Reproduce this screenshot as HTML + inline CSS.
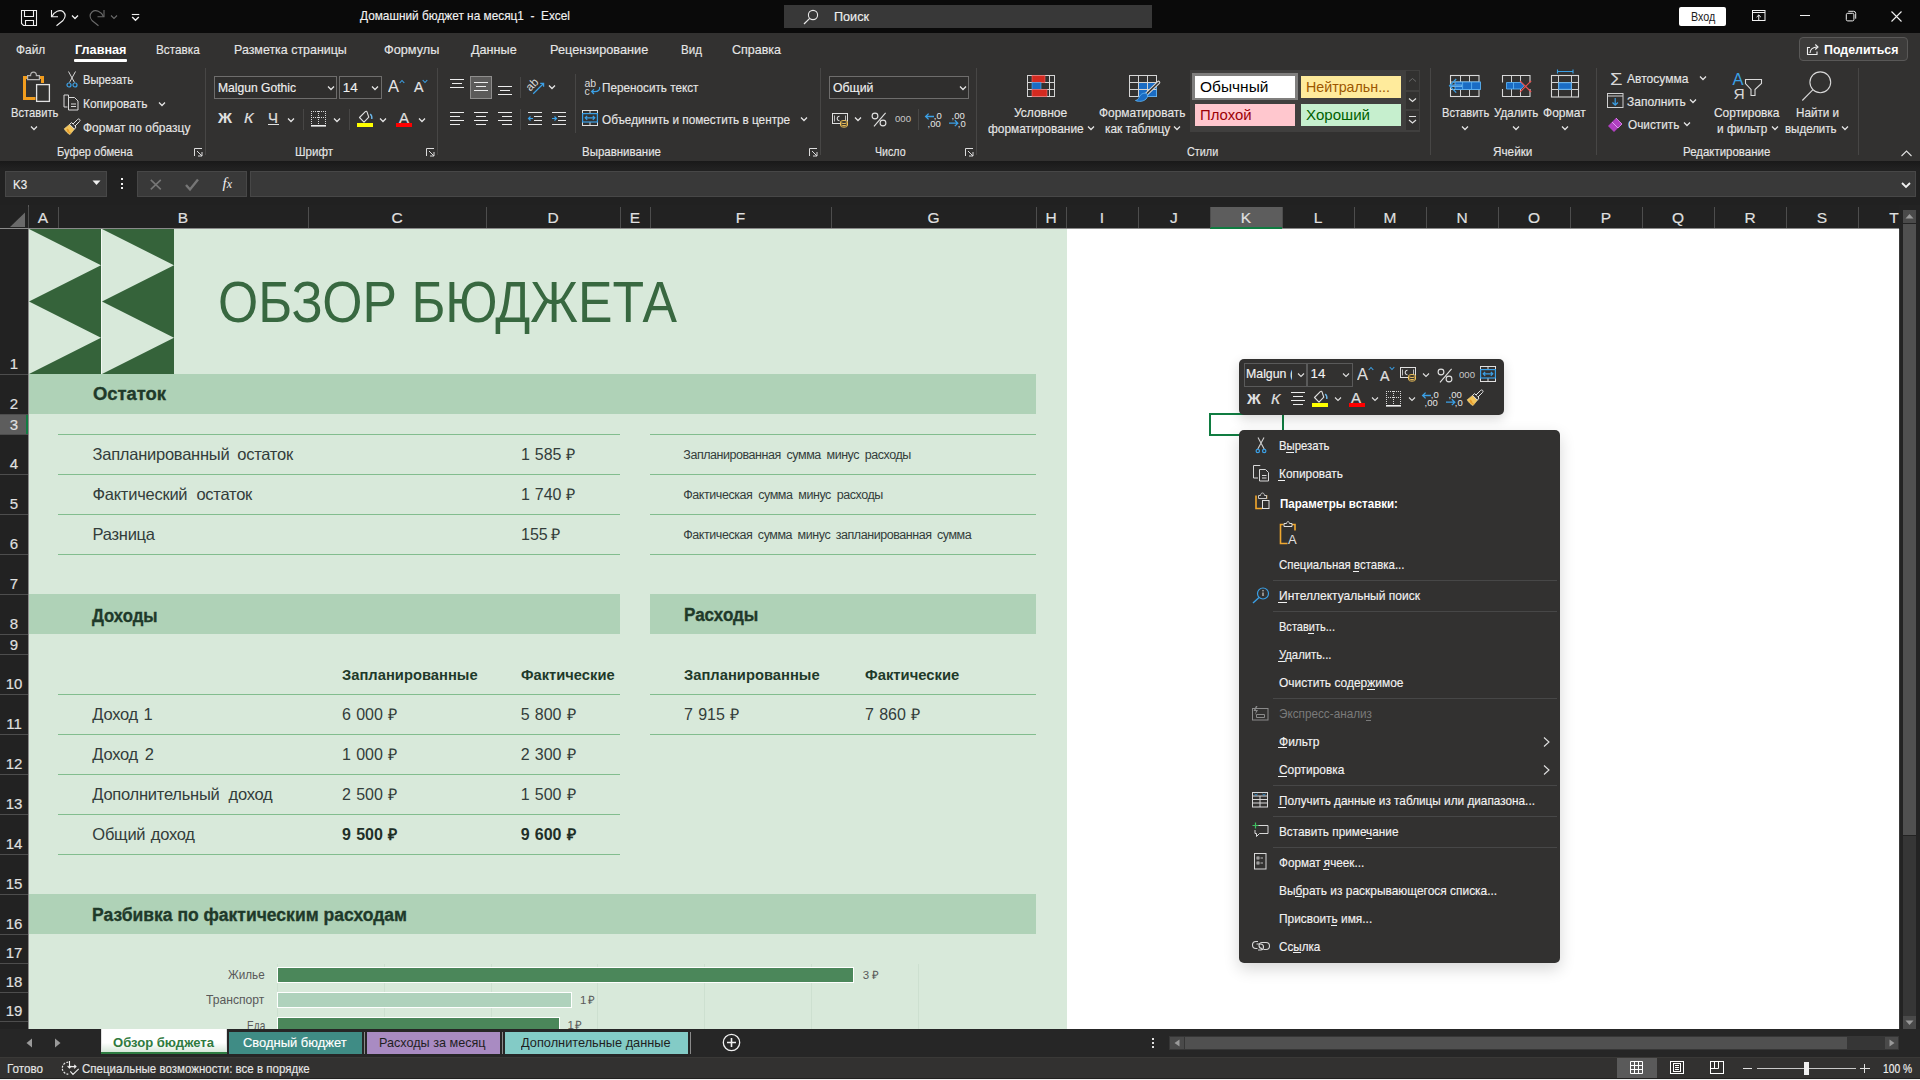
<!DOCTYPE html>
<html><head><meta charset="utf-8">
<style>
*{margin:0;padding:0;box-sizing:border-box}
html,body{width:1920px;height:1080px;overflow:hidden;background:#212121;font-family:"Liberation Sans",sans-serif;color:#e8e8e8;position:relative}
.a{position:absolute}
.t{position:absolute;white-space:pre;line-height:1}
svg.a{overflow:visible}
</style></head><body>
<div class="a" style="left:0px;top:0px;width:1920px;height:33px;background:#0a0a0a;"></div>
<svg class="a" style="left:20px;top:9px;" width="18" height="18" viewBox="0 0 18 18"><path d="M1.5 1.5H16.5V16.5H3.5L1.5 14.5Z" fill="none" stroke="#f0f0f0" stroke-width="1.1"/><path d="M4.5 1.5V7.5H13.5V1.5M5.5 16.5V11.5H13.5V16.5" fill="none" stroke="#f0f0f0" stroke-width="1.1"/></svg>
<svg class="a" style="left:48px;top:8px;" width="20" height="20" viewBox="0 0 20 20"><path d="M3.5 2V8.8H10" fill="none" stroke="#f0f0f0" stroke-width="1.1"/><path d="M4 8.5C6 3.5 12 1 15.5 4C18 6.5 17 10 15 12.5L8.5 17.8" fill="none" stroke="#f0f0f0" stroke-width="1.1"/></svg>
<svg class="a" style="left:70.5px;top:13.5px;" width="8" height="6" viewBox="0 0 8 6"><path d="M1 1.5l3 3 3-3" fill="none" stroke="#f0f0f0" stroke-width="1.3"/></svg>
<svg class="a" style="left:88px;top:8px;" width="20" height="20" viewBox="0 0 20 20"><path d="M16 2V8.8H9.5" fill="none" stroke="#6a6a6a" stroke-width="1.1"/><path d="M15.5 8.5C13.5 3.5 7.5 1 4 4C1.5 6.5 2 10 4 12.5L10.5 17.8" fill="none" stroke="#6a6a6a" stroke-width="1.1"/></svg>
<svg class="a" style="left:109.5px;top:13.5px;" width="8" height="6" viewBox="0 0 8 6"><path d="M1 1.5l3 3 3-3" fill="none" stroke="#6a6a6a" stroke-width="1.1"/></svg>
<svg class="a" style="left:131px;top:13px;" width="9" height="9" viewBox="0 0 9 9"><path d="M0.8 1.5h7.5" stroke="#f0f0f0" stroke-width="1.1"/><path d="M1.2 4l3.3 3.2 3.3-3.2" fill="none" stroke="#f0f0f0" stroke-width="1.4"/></svg>
<div class="t" style="left:360.00px;top:8.89px;font-size:13.3px;color:#f2f2f2;-webkit-text-stroke:0.15px currentColor;transform:scaleX(0.8901);transform-origin:0 0;">Домашний бюджет на месяц1  -  Excel</div>
<div class="a" style="left:784px;top:5px;width:368px;height:23px;background:#383838;"></div>
<svg class="a" style="left:803px;top:9px;" width="16" height="16" viewBox="0 0 16 16"><circle cx="10" cy="6" r="4.6" fill="none" stroke="#e8e8e8" stroke-width="1.1"/><path d="M6.7 9.3L1 15" stroke="#e8e8e8" stroke-width="1.2"/></svg>
<div class="t" style="left:834.00px;top:10.00px;font-size:13.3px;color:#f0f0f0;-webkit-text-stroke:0.15px currentColor;transform:scaleX(0.9497);transform-origin:0 0;">Поиск</div>
<div class="a" style="left:1679px;top:7px;width:47px;height:19px;background:#ffffff;border-radius:2px"></div>
<div class="t" style="left:1690.50px;top:10.20px;font-size:13.3px;color:#1b1b1b;transform:scaleX(0.8076);transform-origin:0 0;">Вход</div>
<svg class="a" style="left:1752px;top:10px;" width="14" height="12" viewBox="0 0 14 12"><rect x="0.5" y="0.5" width="12.5" height="10" fill="none" stroke="#f0f0f0" stroke-width="1"/><path d="M0.5 2.5h12.5" stroke="#f0f0f0" stroke-width="1"/><path d="M6.75 10V5M4.6 7.1L6.75 5 8.9 7.1" fill="none" stroke="#f0f0f0" stroke-width="1"/></svg>
<div class="a" style="left:1800px;top:15px;width:10px;height:1px;background:#f0f0f0;"></div>
<svg class="a" style="left:1845px;top:10px;" width="12" height="12" viewBox="0 0 12 12"><rect x="1.3" y="3.3" width="7.6" height="7.6" rx="1.4" fill="none" stroke="#f0f0f0" stroke-width="1"/><path d="M3.3 1.3h5.2a2.2 2.2 0 0 1 2.2 2.2V8.7" fill="none" stroke="#f0f0f0" stroke-width="1"/></svg>
<svg class="a" style="left:1891px;top:11px;" width="11" height="11" viewBox="0 0 11 11"><path d="M0.5 0.5l10 10M10.5 0.5l-10 10" stroke="#f0f0f0" stroke-width="1.1"/></svg>
<div class="a" style="left:0px;top:33px;width:1920px;height:128px;background:#323130;"></div>
<div class="t" style="left:15.60px;top:42.90px;font-size:13.3px;color:#e6e6e6;-webkit-text-stroke:0.15px currentColor;transform:scaleX(0.8930);transform-origin:0 0;">Файл</div>
<div class="t" style="left:74.50px;top:42.90px;font-size:13.3px;color:#ffffff;font-weight:bold;transform:scaleX(0.9521);transform-origin:0 0;">Главная</div>
<div class="a" style="left:74px;top:59px;width:53px;height:3px;background:#ffffff;border-radius:1px"></div>
<div class="t" style="left:155.60px;top:42.90px;font-size:13.3px;color:#e6e6e6;-webkit-text-stroke:0.15px currentColor;transform:scaleX(0.8840);transform-origin:0 0;">Вставка</div>
<div class="t" style="left:234.40px;top:42.90px;font-size:13.3px;color:#e6e6e6;-webkit-text-stroke:0.15px currentColor;transform:scaleX(0.9349);transform-origin:0 0;">Разметка страницы</div>
<div class="t" style="left:383.50px;top:42.90px;font-size:13.3px;color:#e6e6e6;-webkit-text-stroke:0.15px currentColor;transform:scaleX(0.9572);transform-origin:0 0;">Формулы</div>
<div class="t" style="left:471.00px;top:42.90px;font-size:13.3px;color:#e6e6e6;-webkit-text-stroke:0.15px currentColor;transform:scaleX(0.9511);transform-origin:0 0;">Данные</div>
<div class="t" style="left:550.30px;top:42.90px;font-size:13.3px;color:#e6e6e6;-webkit-text-stroke:0.15px currentColor;transform:scaleX(0.9572);transform-origin:0 0;">Рецензирование</div>
<div class="t" style="left:681.40px;top:42.90px;font-size:13.3px;color:#e6e6e6;-webkit-text-stroke:0.15px currentColor;transform:scaleX(0.8686);transform-origin:0 0;">Вид</div>
<div class="t" style="left:732.40px;top:42.90px;font-size:13.3px;color:#e6e6e6;-webkit-text-stroke:0.15px currentColor;transform:scaleX(0.9392);transform-origin:0 0;">Справка</div>
<div class="a" style="left:1799px;top:37px;width:109px;height:24px;background:#3d3c3b;border:1px solid #595857;border-radius:4px"></div>
<svg class="a" style="left:1806px;top:42px;" width="14" height="14" viewBox="0 0 14 14"><path d="M4 5.5H1.5V12.5H11V9.5" fill="none" stroke="#f0f0f0" stroke-width="1.1"/><path d="M4 11C4 7.5 7 5 11 5" fill="none" stroke="#f0f0f0" stroke-width="1.1"/><path d="M9.3 2.5L12 5 9.3 7.5" fill="none" stroke="#f0f0f0" stroke-width="1.1"/></svg>
<div class="t" style="left:1823.60px;top:43.09px;font-size:13.3px;color:#ffffff;font-weight:bold;transform:scaleX(0.9321);transform-origin:0 0;">Поделиться</div>
<div class="a" style="left:205px;top:68px;width:1px;height:87px;background:#474645;"></div>
<div class="a" style="left:437px;top:68px;width:1px;height:87px;background:#474645;"></div>
<div class="a" style="left:820px;top:68px;width:1px;height:87px;background:#474645;"></div>
<div class="a" style="left:976px;top:68px;width:1px;height:87px;background:#474645;"></div>
<div class="a" style="left:1430px;top:68px;width:1px;height:87px;background:#474645;"></div>
<div class="a" style="left:1596px;top:68px;width:1px;height:87px;background:#474645;"></div>
<div class="a" style="left:1858px;top:68px;width:1px;height:87px;background:#474645;"></div>
<svg class="a" style="left:20px;top:70px;" width="33" height="34" viewBox="0 0 33 34"><g fill="#f29d1e"><rect x="3" y="6" width="3" height="24"/><rect x="3" y="6" width="4.5" height="3"/><rect x="19.5" y="6" width="4.5" height="3"/><rect x="21" y="6" width="3" height="7"/><rect x="3" y="27" width="12.5" height="3"/></g><path d="M7.6 5.6h3c0-2 1.3-3.4 2.9-3.4s2.9 1.4 2.9 3.4h3v4H7.6z" fill="#323130" stroke="#b4b4b4" stroke-width="1.2"/><rect x="16.6" y="14.6" width="12.8" height="16.8" fill="#323130" stroke="#e2e2e2" stroke-width="1.3"/></svg>
<div class="t" style="left:10.50px;top:105.90px;font-size:13.3px;color:#e6e6e6;-webkit-text-stroke:0.15px currentColor;transform:scaleX(0.8408);transform-origin:0 0;">Вставить</div>
<svg class="a" style="left:29.5px;top:125px;" width="8" height="6" viewBox="0 0 8 6"><path d="M1 1.5l3 3 3-3" fill="none" stroke="#e6e6e6" stroke-width="1.25"/></svg>
<svg class="a" style="left:66px;top:71px;" width="12" height="17" viewBox="0 0 12 17"><path d="M2.5 0.5l6 11M9.5 0.5l-6 11" stroke="#d8d8d8" stroke-width="1"/><circle cx="3" cy="14" r="2" fill="none" stroke="#3ba0e6" stroke-width="1.2"/><circle cx="9" cy="14" r="2" fill="none" stroke="#3ba0e6" stroke-width="1.2"/></svg>
<div class="t" style="left:83.40px;top:73.19px;font-size:13.3px;color:#e6e6e6;-webkit-text-stroke:0.15px currentColor;transform:scaleX(0.8469);transform-origin:0 0;">Вырезать</div>
<svg class="a" style="left:63px;top:94px;" width="17" height="17" viewBox="0 0 17 17"><path d="M5.5 3.5V1H1v12h3.5" fill="none" stroke="#d8d8d8" stroke-width="1"/><path d="M5.5 3.5h6l3.5 3.5v9H5.5z" fill="none" stroke="#d8d8d8" stroke-width="1"/><path d="M8 10h5M8 12.5h5" stroke="#d8d8d8" stroke-width="1"/></svg>
<div class="t" style="left:83.40px;top:96.69px;font-size:13.3px;color:#e6e6e6;-webkit-text-stroke:0.15px currentColor;transform:scaleX(0.8993);transform-origin:0 0;">Копировать</div>
<svg class="a" style="left:158.0px;top:101px;" width="8" height="6" viewBox="0 0 8 6"><path d="M1 1.5l3 3 3-3" fill="none" stroke="#e6e6e6" stroke-width="1.25"/></svg>
<svg class="a" style="left:63px;top:118px;" width="18" height="18" viewBox="0 0 18 18"><path d="M1.2 10.8L6.6 6.4L11.4 11.2L7 16.6C4.6 15.4 2.4 13.2 1.2 10.8Z" fill="#f2c45a" stroke="#f7dc90" stroke-width="0.6"/><path d="M4.2 12.5L7.6 15.4M3.8 11l2.2 1.8" stroke="#e89a28" stroke-width="1.3"/><path d="M6.6 6.4L8.6 4.6L13 9L11.4 11.2Z" fill="#323130" stroke="#e8e8e8" stroke-width="1"/><path d="M10 6L14.6 1.4C15.2 0.8 16 0.8 16.6 1.4C17.2 2 17.2 2.8 16.6 3.4L12 8" fill="#323130" stroke="#e8e8e8" stroke-width="1"/></svg>
<div class="t" style="left:83.40px;top:120.79px;font-size:13.3px;color:#e6e6e6;-webkit-text-stroke:0.15px currentColor;transform:scaleX(0.9006);transform-origin:0 0;">Формат по образцу</div>
<div class="t" style="left:56.70px;top:144.89px;font-size:13.3px;color:#e6e6e6;-webkit-text-stroke:0.15px currentColor;transform:scaleX(0.8365);transform-origin:0 0;">Буфер обмена</div>
<svg class="a" style="left:193.5px;top:147.5px;" width="9" height="9" viewBox="0 0 9 9"><path d="M0.5 8V0.5H8" fill="none" stroke="#dcdcdc" stroke-width="1"/><path d="M3 3l5 5M4 8h4V4" fill="none" stroke="#dcdcdc" stroke-width="1"/></svg>
<div class="a" style="left:214px;top:76px;width:123px;height:23px;background:#2f2e2d;border:1px solid #6e6d6c"></div>
<div class="t" style="left:217.60px;top:80.79px;font-size:13.3px;color:#f0f0f0;-webkit-text-stroke:0.15px currentColor;transform:scaleX(0.9107);transform-origin:0 0;">Malgun Gothic</div>
<svg class="a" style="left:326.5px;top:85px;" width="8" height="6" viewBox="0 0 8 6"><path d="M1 1.5l3 3 3-3" fill="none" stroke="#e6e6e6" stroke-width="1.25"/></svg>
<div class="a" style="left:339px;top:76px;width:43px;height:23px;background:#2f2e2d;border:1px solid #6e6d6c"></div>
<div class="t" style="left:342.80px;top:80.79px;font-size:13.3px;color:#f0f0f0;-webkit-text-stroke:0.15px currentColor;">14</div>
<svg class="a" style="left:371.0px;top:85px;" width="8" height="6" viewBox="0 0 8 6"><path d="M1 1.5l3 3 3-3" fill="none" stroke="#e6e6e6" stroke-width="1.25"/></svg>
<div class="t" style="left:388.00px;top:77.65px;font-size:17px;color:#e6e6e6;transform:scaleX(0.9701);transform-origin:0 0;">A</div>
<svg class="a" style="left:399px;top:79px;" width="6" height="5" viewBox="0 0 6 5"><path d="M0.7 4l2.3-2.5 2.3 2.5" fill="none" stroke="#3ba0e6" stroke-width="1.1"/></svg>
<div class="t" style="left:413.50px;top:80.20px;font-size:14px;color:#e6e6e6;-webkit-text-stroke:0.15px currentColor;transform:scaleX(1.0173);transform-origin:0 0;">A</div>
<svg class="a" style="left:422px;top:79px;" width="6" height="5" viewBox="0 0 6 5"><path d="M0.7 1l2.3 2.5 2.3-2.5" fill="none" stroke="#3ba0e6" stroke-width="1.1"/></svg>
<div class="t" style="left:218.00px;top:111.40px;font-size:14px;color:#e0e0e0;font-weight:bold;transform:scaleX(1.1064);transform-origin:0 0;">Ж</div>
<div class="t" style="left:244.00px;top:111.40px;font-size:14px;color:#e0e0e0;-webkit-text-stroke:0.15px currentColor;font-style:italic;transform:scaleX(1.1514);transform-origin:0 0;">К</div>
<div class="t" style="left:268.00px;top:111.10px;font-size:14px;color:#e0e0e0;-webkit-text-stroke:0.15px currentColor;transform:scaleX(1.0717);transform-origin:0 0;">Ч</div>
<div class="a" style="left:267.5px;top:124px;width:11px;height:1px;background:#e0e0e0;"></div>
<svg class="a" style="left:286.5px;top:116.5px;" width="8" height="6" viewBox="0 0 8 6"><path d="M1 1.5l3 3 3-3" fill="none" stroke="#e6e6e6" stroke-width="1.25"/></svg>
<div class="a" style="left:303px;top:109px;width:1px;height:21px;background:#474645;"></div>
<svg class="a" style="left:311px;top:111px;" width="16" height="17" viewBox="0 0 16 17"><g fill="#d8d8d8"><rect x="0" y="0" width="1" height="1"/><rect x="0" y="2" width="1" height="1"/><rect x="0" y="4" width="1" height="1"/><rect x="0" y="6" width="1" height="1"/><rect x="0" y="8" width="1" height="1"/><rect x="0" y="10" width="1" height="1"/><rect x="0" y="12" width="1" height="1"/><rect x="2" y="0" width="1" height="1"/><rect x="2" y="6" width="1" height="1"/><rect x="4" y="0" width="1" height="1"/><rect x="4" y="6" width="1" height="1"/><rect x="6" y="0" width="1" height="1"/><rect x="6" y="6" width="1" height="1"/><rect x="7" y="0" width="1" height="1"/><rect x="7" y="2" width="1" height="1"/><rect x="7" y="4" width="1" height="1"/><rect x="7" y="6" width="1" height="1"/><rect x="7" y="8" width="1" height="1"/><rect x="7" y="10" width="1" height="1"/><rect x="7" y="12" width="1" height="1"/><rect x="8" y="0" width="1" height="1"/><rect x="8" y="6" width="1" height="1"/><rect x="10" y="0" width="1" height="1"/><rect x="10" y="6" width="1" height="1"/><rect x="12" y="0" width="1" height="1"/><rect x="12" y="6" width="1" height="1"/><rect x="14" y="0" width="1" height="1"/><rect x="14" y="2" width="1" height="1"/><rect x="14" y="4" width="1" height="1"/><rect x="14" y="6" width="1" height="1"/><rect x="14" y="8" width="1" height="1"/><rect x="14" y="10" width="1" height="1"/><rect x="14" y="12" width="1" height="1"/></g><rect x="0" y="14" width="15" height="1.6" fill="#f0f0f0"/></svg>
<svg class="a" style="left:332.5px;top:116.5px;" width="8" height="6" viewBox="0 0 8 6"><path d="M1 1.5l3 3 3-3" fill="none" stroke="#e6e6e6" stroke-width="1.25"/></svg>
<div class="a" style="left:349px;top:109px;width:1px;height:21px;background:#474645;"></div>
<svg class="a" style="left:357px;top:109px;" width="18" height="15" viewBox="0 0 18 15"><path d="M2.5 8.5L8.3 2.7c0.6-0.6 1.4-0.6 1.7 0.2L11.8 8.2L7 13.2z" fill="none" stroke="#e0e0e0" stroke-width="1.1" stroke-linejoin="round"/><path d="M13.2 5.2c1.2 0.8 1.9 2.5 1.6 4.8" fill="none" stroke="#6cb8ec" stroke-width="1.4"/></svg>
<div class="a" style="left:357px;top:123px;width:16px;height:4px;background:#ffff00;"></div>
<svg class="a" style="left:378.5px;top:116.5px;" width="8" height="6" viewBox="0 0 8 6"><path d="M1 1.5l3 3 3-3" fill="none" stroke="#e6e6e6" stroke-width="1.25"/></svg>
<div class="t" style="left:399.40px;top:110.35px;font-size:15px;color:#e0e0e0;-webkit-text-stroke:0.15px currentColor;transform:scaleX(0.9995);transform-origin:0 0;">A</div>
<div class="a" style="left:396px;top:123px;width:16px;height:4px;background:#ff0000;"></div>
<svg class="a" style="left:417.5px;top:116.5px;" width="8" height="6" viewBox="0 0 8 6"><path d="M1 1.5l3 3 3-3" fill="none" stroke="#e6e6e6" stroke-width="1.25"/></svg>
<div class="t" style="left:294.80px;top:144.89px;font-size:13.3px;color:#e6e6e6;-webkit-text-stroke:0.15px currentColor;transform:scaleX(0.8684);transform-origin:0 0;">Шрифт</div>
<svg class="a" style="left:426px;top:147.5px;" width="9" height="9" viewBox="0 0 9 9"><path d="M0.5 8V0.5H8" fill="none" stroke="#dcdcdc" stroke-width="1"/><path d="M3 3l5 5M4 8h4V4" fill="none" stroke="#dcdcdc" stroke-width="1"/></svg>
<div class="a" style="left:450px;top:79px;width:14px;height:1px;background:#ececec;"></div>
<div class="a" style="left:452px;top:83px;width:10px;height:1px;background:#ececec;"></div>
<div class="a" style="left:450px;top:87px;width:14px;height:1px;background:#ececec;"></div>
<div class="a" style="left:470px;top:76px;width:22px;height:23px;background:#5c5b5a;border:1px solid #8f8e8d"></div>
<div class="a" style="left:474px;top:82px;width:14px;height:1px;background:#ececec;"></div>
<div class="a" style="left:476px;top:86px;width:10px;height:1px;background:#ececec;"></div>
<div class="a" style="left:474px;top:90px;width:14px;height:1px;background:#ececec;"></div>
<div class="a" style="left:498px;top:86px;width:14px;height:1px;background:#ececec;"></div>
<div class="a" style="left:500px;top:90px;width:10px;height:1px;background:#ececec;"></div>
<div class="a" style="left:498px;top:94px;width:14px;height:1px;background:#ececec;"></div>
<div class="a" style="left:520px;top:77px;width:1px;height:21px;background:#474645;"></div>
<svg class="a" style="left:526px;top:77px;" width="20" height="19" viewBox="0 0 20 19"><text x="0.5" y="11.3" font-family="Liberation Sans" font-size="11.5" fill="#dcdcdc" transform="rotate(-45 6.5 8.5)">ab</text><path d="M7.2 16.8L17.3 6.7M14.2 6.4h3.4v3.4" fill="none" stroke="#3ba0e6" stroke-width="1.25"/></svg>
<svg class="a" style="left:547.5px;top:84px;" width="8" height="6" viewBox="0 0 8 6"><path d="M1 1.5l3 3 3-3" fill="none" stroke="#e6e6e6" stroke-width="1.25"/></svg>
<div class="a" style="left:575px;top:74px;width:1px;height:59px;background:#474645;"></div>
<svg class="a" style="left:584px;top:78px;" width="18" height="18" viewBox="0 0 18 18"><text x="0.5" y="9" font-family="Liberation Sans" font-size="10.5" fill="#dcdcdc">ab</text><text x="0.5" y="16.5" font-family="Liberation Sans" font-size="10.5" fill="#dcdcdc">c</text><path d="M15.5 9c0.8 2.5-1 4.5-4.8 4.6H7.8M10 11.2L7.6 13.6 10 16" fill="none" stroke="#3ba0e6" stroke-width="1.25"/></svg>
<div class="t" style="left:602.20px;top:81.00px;font-size:13.3px;color:#e6e6e6;-webkit-text-stroke:0.15px currentColor;transform:scaleX(0.8826);transform-origin:0 0;">Переносить текст</div>
<div class="a" style="left:450px;top:112px;width:14px;height:1px;background:#ececec;"></div>
<div class="a" style="left:450px;top:116px;width:10px;height:1px;background:#ececec;"></div>
<div class="a" style="left:450px;top:120px;width:14px;height:1px;background:#ececec;"></div>
<div class="a" style="left:450px;top:124px;width:10px;height:1px;background:#ececec;"></div>
<div class="a" style="left:474px;top:112px;width:14px;height:1px;background:#ececec;"></div>
<div class="a" style="left:476px;top:116px;width:10px;height:1px;background:#ececec;"></div>
<div class="a" style="left:474px;top:120px;width:14px;height:1px;background:#ececec;"></div>
<div class="a" style="left:476px;top:124px;width:10px;height:1px;background:#ececec;"></div>
<div class="a" style="left:498px;top:112px;width:14px;height:1px;background:#ececec;"></div>
<div class="a" style="left:502px;top:116px;width:10px;height:1px;background:#ececec;"></div>
<div class="a" style="left:498px;top:120px;width:14px;height:1px;background:#ececec;"></div>
<div class="a" style="left:502px;top:124px;width:10px;height:1px;background:#ececec;"></div>
<div class="a" style="left:520px;top:109px;width:1px;height:21px;background:#474645;"></div>
<svg class="a" style="left:528px;top:111px;" width="16" height="16" viewBox="0 0 16 16"><path d="M0 1.5h14M6 5.5h8M6 9.5h8M0 13.5h14" stroke="#e6e6e6" stroke-width="1.2"/><path d="M5 7.5H0.5M2.5 5.5l-2 2 2 2" fill="none" stroke="#3ba0e6" stroke-width="1.2"/></svg>
<svg class="a" style="left:552px;top:111px;" width="16" height="16" viewBox="0 0 16 16"><path d="M0 1.5h14M6 5.5h8M6 9.5h8M0 13.5h14" stroke="#e6e6e6" stroke-width="1.2"/><path d="M0 7.5h4.5M2.5 5.5l2 2-2 2" fill="none" stroke="#3ba0e6" stroke-width="1.2"/></svg>
<svg class="a" style="left:582px;top:110px;" width="17" height="17" viewBox="0 0 17 17"><rect x="0.5" y="0.5" width="15" height="15" fill="none" stroke="#e0e0e0" stroke-width="1"/><path d="M8 0.5v3.5M8 12v3.5" stroke="#e0e0e0" stroke-width="1"/><rect x="0.6" y="3.6" width="14.8" height="8.4" fill="#323130" stroke="#3ba0e6" stroke-width="1.2"/><path d="M3.2 7.8h9.6M5.2 5.8l-2 2 2 2M10.8 5.8l2 2-2 2" fill="none" stroke="#3ba0e6" stroke-width="1.2"/></svg>
<div class="t" style="left:602.20px;top:112.69px;font-size:13.3px;color:#e6e6e6;-webkit-text-stroke:0.15px currentColor;transform:scaleX(0.8851);transform-origin:0 0;">Объединить и поместить в центре</div>
<svg class="a" style="left:799.5px;top:116px;" width="8" height="6" viewBox="0 0 8 6"><path d="M1 1.5l3 3 3-3" fill="none" stroke="#e6e6e6" stroke-width="1.25"/></svg>
<div class="t" style="left:581.70px;top:144.89px;font-size:13.3px;color:#e6e6e6;-webkit-text-stroke:0.15px currentColor;transform:scaleX(0.8629);transform-origin:0 0;">Выравнивание</div>
<svg class="a" style="left:808.5px;top:147.5px;" width="9" height="9" viewBox="0 0 9 9"><path d="M0.5 8V0.5H8" fill="none" stroke="#dcdcdc" stroke-width="1"/><path d="M3 3l5 5M4 8h4V4" fill="none" stroke="#dcdcdc" stroke-width="1"/></svg>
<div class="a" style="left:829px;top:76px;width:140px;height:23px;background:#2f2e2d;border:1px solid #6e6d6c"></div>
<div class="t" style="left:832.60px;top:80.79px;font-size:13.3px;color:#f0f0f0;-webkit-text-stroke:0.15px currentColor;transform:scaleX(0.9231);transform-origin:0 0;">Общий</div>
<svg class="a" style="left:958.5px;top:85px;" width="8" height="6" viewBox="0 0 8 6"><path d="M1 1.5l3 3 3-3" fill="none" stroke="#e6e6e6" stroke-width="1.25"/></svg>
<svg class="a" style="left:832px;top:113px;" width="18" height="15" viewBox="0 0 18 15"><rect x="0.5" y="0.5" width="15" height="10" fill="none" stroke="#e0e0e0" stroke-width="1"/><path d="M2.5 2.5v6M13.5 2.5v6" stroke="#e0e0e0" stroke-width="0.8"/><path d="M7.5 3.2A2.2 2.2 0 1 0 7.5 7.8" fill="none" stroke="#e0e0e0" stroke-width="1.1"/><path d="M8.5 9v3.5c0 1 1.6 1.6 3.5 1.6s3.5-0.6 3.5-1.6V9" fill="#323130" stroke="#f2c45a" stroke-width="1"/><ellipse cx="12" cy="9" rx="3.5" ry="1.5" fill="#323130" stroke="#f2c45a" stroke-width="1"/><path d="M8.5 11c0 1 1.6 1.6 3.5 1.6s3.5-0.6 3.5-1.6" fill="none" stroke="#f2c45a" stroke-width="1"/></svg>
<svg class="a" style="left:853.5px;top:116px;" width="8" height="6" viewBox="0 0 8 6"><path d="M1 1.5l3 3 3-3" fill="none" stroke="#e6e6e6" stroke-width="1.25"/></svg>
<svg class="a" style="left:871px;top:112px;" width="17" height="16" viewBox="0 0 17 16"><circle cx="4" cy="4" r="2.9" fill="none" stroke="#e2e2e2" stroke-width="1.1"/><circle cx="12" cy="11" r="2.9" fill="none" stroke="#e2e2e2" stroke-width="1.1"/><path d="M14.6 0.8L3 14.4" stroke="#e2e2e2" stroke-width="1.1"/></svg>
<div class="t" style="left:894.80px;top:114.55px;font-size:9px;color:#c8c8c8;transform:scaleX(1.0655);transform-origin:0 0;">000</div>
<div class="a" style="left:918px;top:109px;width:1px;height:21px;background:#474645;"></div>
<svg class="a" style="left:924px;top:111px;" width="18" height="17" viewBox="0 0 18 17"><path d="M10 5.5H1.8M4.6 2.6L1.6 5.5 4.6 8.4" fill="none" stroke="#3ba0e6" stroke-width="1.3"/><text x="9.8" y="7.8" font-family="Liberation Sans" font-size="9.5" fill="#e6e6e6">,0</text><text x="3.6" y="15.6" font-family="Liberation Sans" font-size="9.5" fill="#e6e6e6">,00</text></svg>
<svg class="a" style="left:948px;top:111px;" width="18" height="17" viewBox="0 0 18 17"><text x="3.6" y="7.8" font-family="Liberation Sans" font-size="9.5" fill="#e6e6e6">,00</text><path d="M1 12.2H9.6M6.8 9.3L9.8 12.2 6.8 15.1" fill="none" stroke="#3ba0e6" stroke-width="1.3"/><text x="9.8" y="15.6" font-family="Liberation Sans" font-size="9.5" fill="#e6e6e6">,0</text></svg>
<div class="t" style="left:874.90px;top:144.89px;font-size:13.3px;color:#e6e6e6;-webkit-text-stroke:0.15px currentColor;transform:scaleX(0.8000);transform-origin:0 0;">Число</div>
<svg class="a" style="left:964.5px;top:147.5px;" width="9" height="9" viewBox="0 0 9 9"><path d="M0.5 8V0.5H8" fill="none" stroke="#dcdcdc" stroke-width="1"/><path d="M3 3l5 5M4 8h4V4" fill="none" stroke="#dcdcdc" stroke-width="1"/></svg>
<svg class="a" style="left:1027px;top:75px;" width="29" height="23" viewBox="0 0 29 23"><rect x="0.5" y="0.5" width="27" height="21" fill="none" stroke="#d4d4d4" stroke-width="1"/><path d="M5.5 0.5v21M22.5 0.5v21M0.5 7.5h27M0.5 14.5h27" stroke="#d4d4d4" stroke-width="1"/><rect x="5" y="0.5" width="13" height="7" fill="#d42a20" stroke="#f07070" stroke-width="0.6"/><rect x="5" y="7.5" width="9" height="7" fill="#1a6cc4" stroke="#5ab0f0" stroke-width="0.6"/><rect x="5" y="14.5" width="15" height="7" fill="#d42a20" stroke="#f07070" stroke-width="0.6"/></svg>
<div class="t" style="left:1014.00px;top:105.90px;font-size:13.3px;color:#e6e6e6;-webkit-text-stroke:0.15px currentColor;transform:scaleX(0.9060);transform-origin:0 0;">Условное</div>
<div class="t" style="left:987.60px;top:122.00px;font-size:13.3px;color:#e6e6e6;-webkit-text-stroke:0.15px currentColor;transform:scaleX(0.8962);transform-origin:0 0;">форматирование</div>
<svg class="a" style="left:1086.5px;top:125px;" width="8" height="6" viewBox="0 0 8 6"><path d="M1 1.5l3 3 3-3" fill="none" stroke="#e6e6e6" stroke-width="1.25"/></svg>
<svg class="a" style="left:1128px;top:75px;" width="34" height="28" viewBox="0 0 34 28"><rect x="1.5" y="0.5" width="27" height="21" fill="none" stroke="#d4d4d4" stroke-width="1"/><rect x="10.5" y="7.5" width="18" height="14" fill="#1a6cc4" stroke="#5ab0f0" stroke-width="0.8"/><path d="M10.5 0.5v21M19.5 0.5v7M1.5 7.5h27M1.5 14.5h27M19.5 7.5v14" stroke="#d4d4d4" stroke-width="1"/><path d="M30.5 7.5L18 19.5" stroke="#d8d8d8" stroke-width="3.6" stroke-linecap="round"/><path d="M30.5 7.5L18 19.5" stroke="#323130" stroke-width="1.5" stroke-linecap="round"/><path d="M18.5 18.5c-3-1-6 0.5-7.5 4-0.8 1.8-2 2.7-3.5 3 3.5 1.5 8 1 10.5-1.5 2-2 2-4 0.5-5.5z" fill="#1a6cc4" stroke="#5ab0f0" stroke-width="0.9"/></svg>
<div class="t" style="left:1099.30px;top:105.90px;font-size:13.3px;color:#e6e6e6;-webkit-text-stroke:0.15px currentColor;transform:scaleX(0.8963);transform-origin:0 0;">Форматировать</div>
<div class="t" style="left:1104.50px;top:122.00px;font-size:13.3px;color:#e6e6e6;-webkit-text-stroke:0.15px currentColor;transform:scaleX(0.8965);transform-origin:0 0;">как таблицу</div>
<svg class="a" style="left:1173.0px;top:125px;" width="8" height="6" viewBox="0 0 8 6"><path d="M1 1.5l3 3 3-3" fill="none" stroke="#e6e6e6" stroke-width="1.25"/></svg>
<div class="a" style="left:1190px;top:70px;width:230px;height:62px;background:#403f3e;"></div>
<div class="a" style="left:1192px;top:73px;width:106px;height:27px;background:#807f7e;"></div>
<div class="a" style="left:1195px;top:76px;width:100px;height:22px;background:#ffffff;"></div>
<div class="t" style="left:1199.60px;top:78.65px;font-size:15px;color:#000000;transform:scaleX(1.0317);transform-origin:0 0;">Обычный</div>
<div class="a" style="left:1301px;top:76px;width:100px;height:22px;background:#ffeb9c;"></div>
<div class="t" style="left:1305.50px;top:78.65px;font-size:15px;color:#9c5700;transform:scaleX(0.9496);transform-origin:0 0;">Нейтральн...</div>
<div class="a" style="left:1195px;top:104px;width:100px;height:22px;background:#ffc7ce;"></div>
<div class="t" style="left:1199.60px;top:106.75px;font-size:15px;color:#9c0006;transform:scaleX(0.9917);transform-origin:0 0;">Плохой</div>
<div class="a" style="left:1301px;top:104px;width:100px;height:22px;background:#c6efce;"></div>
<div class="t" style="left:1305.50px;top:106.75px;font-size:15px;color:#006100;transform:scaleX(1.0054);transform-origin:0 0;">Хороший</div>
<div class="a" style="left:1406px;top:71px;width:13px;height:19px;background:#323130;"></div>
<div class="a" style="left:1406px;top:92px;width:13px;height:17px;background:#323130;"></div>
<div class="a" style="left:1406px;top:111px;width:13px;height:19px;background:#323130;"></div>
<svg class="a" style="left:1407px;top:77px;" width="11" height="6" viewBox="0 0 11 6"><path d="M2 4.5l3.5-3 3.5 3" fill="none" stroke="#6a6a6a" stroke-width="1"/></svg>
<svg class="a" style="left:1407px;top:97px;" width="11" height="6" viewBox="0 0 11 6"><path d="M2 1.5l3.5 3 3.5-3" fill="none" stroke="#e0e0e0" stroke-width="1.2"/></svg>
<svg class="a" style="left:1407px;top:115px;" width="11" height="10" viewBox="0 0 11 10"><path d="M2 1.5h7M2 5l3.5 3 3.5-3" fill="none" stroke="#e0e0e0" stroke-width="1.2"/></svg>
<div class="t" style="left:1187.40px;top:144.89px;font-size:13.3px;color:#e6e6e6;-webkit-text-stroke:0.15px currentColor;transform:scaleX(0.8143);transform-origin:0 0;">Стили</div>
<svg class="a" style="left:1448px;top:74px;" width="35" height="24" viewBox="0 0 35 24"><rect x="2.5" y="1.5" width="28.5" height="21" fill="none" stroke="#d8d8d8" stroke-width="1.1"/><path d="M12.5 1.5v21M21.5 1.5v21M2.5 8h28.5M2.5 15.5h28.5" stroke="#d0d0d0" stroke-width="1"/><rect x="7" y="8" width="25.5" height="7.5" fill="#1a6cc4" stroke="#5ab0f0" stroke-width="0.9"/><path d="M14.6 8v7.5M23.6 8v7.5" stroke="#5ab0f0" stroke-width="0.9"/><path d="M2 11.8H14" stroke="#7cc4f4" stroke-width="2.4"/><path d="M2.5 11.8H13.5" stroke="#1a6cc4" stroke-width="0.8"/><path d="M8.2 5L1.6 11.8L8.2 18.6" fill="none" stroke="#3ba0e6" stroke-width="1.3"/></svg>
<div class="t" style="left:1441.50px;top:105.79px;font-size:13.3px;color:#e6e6e6;-webkit-text-stroke:0.15px currentColor;transform:scaleX(0.8390);transform-origin:0 0;">Вставить</div>
<svg class="a" style="left:1461.0px;top:125px;" width="8" height="6" viewBox="0 0 8 6"><path d="M1 1.5l3 3 3-3" fill="none" stroke="#e6e6e6" stroke-width="1.25"/></svg>
<svg class="a" style="left:1501px;top:74px;" width="33" height="24" viewBox="0 0 33 24"><path d="M1.5 8.5V1.5h27.5v7M1.5 15v7.5h27.5V15" fill="none" stroke="#d8d8d8" stroke-width="1.1"/><path d="M10.5 1.5v7M19.5 1.5v7M10.5 15v7.5M19.5 15v7.5" stroke="#d0d0d0" stroke-width="1"/><path d="M5.5 8.5h14.5l3 3.3-3 3.2H5.5z" fill="#1a6cc4" stroke="#5ab0f0" stroke-width="0.9"/><path d="M12.5 8.5v6.5" stroke="#5ab0f0" stroke-width="0.9"/><path d="M19 6.8l11.2 11.2M30.2 6.8L19 18" stroke="#e85050" stroke-width="1.2"/></svg>
<div class="t" style="left:1493.70px;top:105.79px;font-size:13.3px;color:#e6e6e6;-webkit-text-stroke:0.15px currentColor;transform:scaleX(0.8724);transform-origin:0 0;">Удалить</div>
<svg class="a" style="left:1512.0px;top:125px;" width="8" height="6" viewBox="0 0 8 6"><path d="M1 1.5l3 3 3-3" fill="none" stroke="#e6e6e6" stroke-width="1.25"/></svg>
<svg class="a" style="left:1550px;top:69px;" width="30" height="30" viewBox="0 0 30 30"><path d="M7.5 2.5h15.5M7.5 0.5v4M23 0.5v4" stroke="#3ba0e6" stroke-width="1.1"/><rect x="1.5" y="6.5" width="27" height="21.5" fill="none" stroke="#d8d8d8" stroke-width="1.1"/><path d="M8.5 6.5v21.5M21.5 6.5v21.5M1.5 13.5h27M1.5 20.5h27" stroke="#d0d0d0" stroke-width="1"/><rect x="8.75" y="13.75" width="12.5" height="6.5" fill="#1a6cc4" stroke="#5ab0f0" stroke-width="0.9"/></svg>
<div class="t" style="left:1543.30px;top:105.79px;font-size:13.3px;color:#e6e6e6;-webkit-text-stroke:0.15px currentColor;transform:scaleX(0.9038);transform-origin:0 0;">Формат</div>
<svg class="a" style="left:1561.0px;top:125px;" width="8" height="6" viewBox="0 0 8 6"><path d="M1 1.5l3 3 3-3" fill="none" stroke="#e6e6e6" stroke-width="1.25"/></svg>
<div class="t" style="left:1493.20px;top:144.89px;font-size:13.3px;color:#e6e6e6;-webkit-text-stroke:0.15px currentColor;transform:scaleX(0.8832);transform-origin:0 0;">Ячейки</div>
<div class="t" style="left:1609.50px;top:70.55px;font-size:17px;color:#d8d8d8;transform:scaleX(1.1895);transform-origin:0 0;">Σ</div>
<div class="t" style="left:1627.20px;top:72.04px;font-size:13.3px;color:#e6e6e6;-webkit-text-stroke:0.15px currentColor;transform:scaleX(0.9054);transform-origin:0 0;">Автосумма</div>
<svg class="a" style="left:1698.5px;top:75px;" width="8" height="6" viewBox="0 0 8 6"><path d="M1 1.5l3 3 3-3" fill="none" stroke="#e6e6e6" stroke-width="1.25"/></svg>
<svg class="a" style="left:1607px;top:93px;" width="17" height="16" viewBox="0 0 17 16"><rect x="0.5" y="0.5" width="15.5" height="14" fill="none" stroke="#d0d0d0" stroke-width="1"/><path d="M0.5 3h15.5" stroke="#d0d0d0" stroke-width="1"/><path d="M8.2 5v7M5.5 9.5l2.7 2.7 2.7-2.7" fill="none" stroke="#3ba0e6" stroke-width="1.2"/></svg>
<div class="t" style="left:1627.20px;top:94.90px;font-size:13.3px;color:#e6e6e6;-webkit-text-stroke:0.15px currentColor;transform:scaleX(0.9006);transform-origin:0 0;">Заполнить</div>
<svg class="a" style="left:1689.0px;top:98px;" width="8" height="6" viewBox="0 0 8 6"><path d="M1 1.5l3 3 3-3" fill="none" stroke="#e6e6e6" stroke-width="1.25"/></svg>
<svg class="a" style="left:1607px;top:116px;" width="17" height="17" viewBox="0 0 17 17"><path d="M1 10l8-8 6 6-8 8z" fill="#b040c0"/><path d="M5 6l6 6" stroke="#e0a0f0" stroke-width="1"/><path d="M9 2l6 6-4 4" fill="none" stroke="#d080e0" stroke-width="1"/></svg>
<div class="t" style="left:1627.50px;top:117.79px;font-size:13.3px;color:#e6e6e6;-webkit-text-stroke:0.15px currentColor;transform:scaleX(0.8861);transform-origin:0 0;">Очистить</div>
<svg class="a" style="left:1682.5px;top:121px;" width="8" height="6" viewBox="0 0 8 6"><path d="M1 1.5l3 3 3-3" fill="none" stroke="#e6e6e6" stroke-width="1.25"/></svg>
<svg class="a" style="left:1730px;top:70px;" width="34" height="32" viewBox="0 0 34 32"><text x="2.6" y="15" font-family="Liberation Sans" font-size="16.5" fill="#3ba0e6">A</text><text x="3.6" y="29" font-family="Liberation Sans" font-size="15.5" fill="#d8d8d8">Я</text><path d="M15.5 9.5H31.5V13.5L25 19.5V25.5H21V19.5L15.5 13.5Z" fill="none" stroke="#dadada" stroke-width="1.1"/></svg>
<div class="t" style="left:1714.30px;top:105.90px;font-size:13.3px;color:#e6e6e6;-webkit-text-stroke:0.15px currentColor;transform:scaleX(0.8973);transform-origin:0 0;">Сортировка</div>
<div class="t" style="left:1716.50px;top:122.00px;font-size:13.3px;color:#e6e6e6;-webkit-text-stroke:0.15px currentColor;transform:scaleX(0.8881);transform-origin:0 0;">и фильтр</div>
<svg class="a" style="left:1770.5px;top:125px;" width="8" height="6" viewBox="0 0 8 6"><path d="M1 1.5l3 3 3-3" fill="none" stroke="#e6e6e6" stroke-width="1.25"/></svg>
<svg class="a" style="left:1800px;top:70px;" width="33" height="32" viewBox="0 0 33 32"><circle cx="20.3" cy="12.3" r="10.4" fill="none" stroke="#d8d8d8" stroke-width="1.1"/><path d="M13 19.6L2.3 30.5" stroke="#d8d8d8" stroke-width="1.1"/></svg>
<div class="t" style="left:1795.60px;top:105.90px;font-size:13.3px;color:#e6e6e6;-webkit-text-stroke:0.15px currentColor;transform:scaleX(0.8782);transform-origin:0 0;">Найти и</div>
<div class="t" style="left:1785.40px;top:122.00px;font-size:13.3px;color:#e6e6e6;-webkit-text-stroke:0.15px currentColor;transform:scaleX(0.8665);transform-origin:0 0;">выделить</div>
<svg class="a" style="left:1840.5px;top:125px;" width="8" height="6" viewBox="0 0 8 6"><path d="M1 1.5l3 3 3-3" fill="none" stroke="#e6e6e6" stroke-width="1.25"/></svg>
<div class="t" style="left:1683.40px;top:144.89px;font-size:13.3px;color:#e6e6e6;-webkit-text-stroke:0.15px currentColor;transform:scaleX(0.8617);transform-origin:0 0;">Редактирование</div>
<svg class="a" style="left:1901px;top:150px;" width="11" height="7" viewBox="0 0 11 7"><path d="M0.5 6l5-5 5 5" fill="none" stroke="#e0e0e0" stroke-width="1.1"/></svg>
<div class="a" style="left:0px;top:161px;width:1920px;height:44px;background:#212121;"></div>
<div class="a" style="left:0px;top:161px;width:1920px;height:8px;background:linear-gradient(#191919,#212121);"></div>
<div class="a" style="left:5px;top:171px;width:102px;height:26px;background:#393939;border:1px solid #474747"></div>
<div class="t" style="left:12.50px;top:178.29px;font-size:13.3px;color:#f0f0f0;-webkit-text-stroke:0.15px currentColor;transform:scaleX(0.8729);transform-origin:0 0;">K3</div>
<svg class="a" style="left:92px;top:180px;" width="9" height="6" viewBox="0 0 9 6"><path d="M0.5 0.5h8L4.5 5z" fill="#f0f0f0"/></svg>
<div class="a" style="left:121px;top:178px;width:2px;height:2px;background:#f0f0f0;"></div>
<div class="a" style="left:121px;top:183px;width:2px;height:2px;background:#f0f0f0;"></div>
<div class="a" style="left:121px;top:187px;width:2px;height:2px;background:#f0f0f0;"></div>
<div class="a" style="left:137px;top:171px;width:110px;height:26px;background:#393939;border:1px solid #474747"></div>
<svg class="a" style="left:150px;top:179px;" width="12" height="11" viewBox="0 0 12 11"><path d="M0.8 0.8l10 9.5M10.8 0.8l-10 9.5" stroke="#767676" stroke-width="1.6"/></svg>
<svg class="a" style="left:185px;top:178px;" width="14" height="13" viewBox="0 0 14 13"><path d="M1 7l4 4.5L13 1.5" fill="none" stroke="#767676" stroke-width="2.4"/></svg>
<div class="t" style="left:222.5px;top:176px;font-family:'Liberation Serif';font-style:italic;font-size:15px;color:#f0f0f0">f<span style="font-size:12px">x</span></div>
<div class="a" style="left:250px;top:171px;width:1666px;height:26px;background:#393939;border:1px solid #474747"></div>
<svg class="a" style="left:1901px;top:182px;" width="10" height="7" viewBox="0 0 10 7"><path d="M1 1l4 4 4-4" fill="none" stroke="#f0f0f0" stroke-width="1.8"/></svg>
<div class="a" style="left:0px;top:205px;width:1920px;height:24px;background:#222222;"></div>
<svg class="a" style="left:7px;top:212px;" width="19" height="16" viewBox="0 0 19 16"><path d="M18 0.5V15H3z" fill="#6a6a6a"/></svg>
<div class="a" style="left:28px;top:205px;width:1px;height:24px;background:#5a5a5a;"></div>
<div class="a" style="left:0px;top:228px;width:1900px;height:1px;background:#8a8a8a;"></div>
<div class="a" style="left:1210px;top:207px;width:72px;height:21px;background:#5d5d5d;"></div>
<div class="a" style="left:1210px;top:227px;width:72px;height:2px;background:#107c41;"></div>
<div class="a" style="left:28px;top:207px;width:1px;height:21px;background:#4d4d4d;"></div>
<div class="t" style="left:37.83px;top:210.32px;font-size:15.5px;color:#e0e0e0;-webkit-text-stroke:0.15px currentColor;">A</div>
<div class="a" style="left:58px;top:207px;width:1px;height:21px;background:#4d4d4d;"></div>
<div class="t" style="left:177.83px;top:210.32px;font-size:15.5px;color:#e0e0e0;-webkit-text-stroke:0.15px currentColor;">B</div>
<div class="a" style="left:308px;top:207px;width:1px;height:21px;background:#4d4d4d;"></div>
<div class="t" style="left:391.40px;top:210.32px;font-size:15.5px;color:#e0e0e0;-webkit-text-stroke:0.15px currentColor;">C</div>
<div class="a" style="left:486px;top:207px;width:1px;height:21px;background:#4d4d4d;"></div>
<div class="t" style="left:547.40px;top:210.32px;font-size:15.5px;color:#e0e0e0;-webkit-text-stroke:0.15px currentColor;">D</div>
<div class="a" style="left:620px;top:207px;width:1px;height:21px;background:#4d4d4d;"></div>
<div class="t" style="left:629.83px;top:210.32px;font-size:15.5px;color:#e0e0e0;-webkit-text-stroke:0.15px currentColor;">E</div>
<div class="a" style="left:650px;top:207px;width:1px;height:21px;background:#4d4d4d;"></div>
<div class="t" style="left:735.77px;top:210.32px;font-size:15.5px;color:#e0e0e0;-webkit-text-stroke:0.15px currentColor;">F</div>
<div class="a" style="left:831px;top:207px;width:1px;height:21px;background:#4d4d4d;"></div>
<div class="t" style="left:927.47px;top:210.32px;font-size:15.5px;color:#e0e0e0;-webkit-text-stroke:0.15px currentColor;">G</div>
<div class="a" style="left:1036px;top:207px;width:1px;height:21px;background:#4d4d4d;"></div>
<div class="t" style="left:1045.40px;top:210.32px;font-size:15.5px;color:#e0e0e0;-webkit-text-stroke:0.15px currentColor;">H</div>
<div class="a" style="left:1066px;top:207px;width:1px;height:21px;background:#4d4d4d;"></div>
<div class="t" style="left:1099.85px;top:210.32px;font-size:15.5px;color:#e0e0e0;-webkit-text-stroke:0.15px currentColor;">I</div>
<div class="a" style="left:1138px;top:207px;width:1px;height:21px;background:#4d4d4d;"></div>
<div class="t" style="left:1170.12px;top:210.32px;font-size:15.5px;color:#e0e0e0;-webkit-text-stroke:0.15px currentColor;">J</div>
<div class="a" style="left:1210px;top:207px;width:1px;height:21px;background:#4d4d4d;"></div>
<div class="t" style="left:1240.83px;top:210.32px;font-size:15.5px;color:#e0e0e0;-webkit-text-stroke:0.15px currentColor;">K</div>
<div class="a" style="left:1282px;top:207px;width:1px;height:21px;background:#4d4d4d;"></div>
<div class="t" style="left:1313.69px;top:210.32px;font-size:15.5px;color:#e0e0e0;-webkit-text-stroke:0.15px currentColor;">L</div>
<div class="a" style="left:1354px;top:207px;width:1px;height:21px;background:#4d4d4d;"></div>
<div class="t" style="left:1383.54px;top:210.32px;font-size:15.5px;color:#e0e0e0;-webkit-text-stroke:0.15px currentColor;">M</div>
<div class="a" style="left:1426px;top:207px;width:1px;height:21px;background:#4d4d4d;"></div>
<div class="t" style="left:1456.40px;top:210.32px;font-size:15.5px;color:#e0e0e0;-webkit-text-stroke:0.15px currentColor;">N</div>
<div class="a" style="left:1498px;top:207px;width:1px;height:21px;background:#4d4d4d;"></div>
<div class="t" style="left:1527.97px;top:210.32px;font-size:15.5px;color:#e0e0e0;-webkit-text-stroke:0.15px currentColor;">O</div>
<div class="a" style="left:1570px;top:207px;width:1px;height:21px;background:#4d4d4d;"></div>
<div class="t" style="left:1600.83px;top:210.32px;font-size:15.5px;color:#e0e0e0;-webkit-text-stroke:0.15px currentColor;">P</div>
<div class="a" style="left:1642px;top:207px;width:1px;height:21px;background:#4d4d4d;"></div>
<div class="t" style="left:1671.97px;top:210.32px;font-size:15.5px;color:#e0e0e0;-webkit-text-stroke:0.15px currentColor;">Q</div>
<div class="a" style="left:1714px;top:207px;width:1px;height:21px;background:#4d4d4d;"></div>
<div class="t" style="left:1744.40px;top:210.32px;font-size:15.5px;color:#e0e0e0;-webkit-text-stroke:0.15px currentColor;">R</div>
<div class="a" style="left:1786px;top:207px;width:1px;height:21px;background:#4d4d4d;"></div>
<div class="t" style="left:1816.83px;top:210.32px;font-size:15.5px;color:#e0e0e0;-webkit-text-stroke:0.15px currentColor;">S</div>
<div class="a" style="left:1858px;top:207px;width:1px;height:21px;background:#4d4d4d;"></div>
<div class="t" style="left:1889.27px;top:210.32px;font-size:15.5px;color:#e0e0e0;-webkit-text-stroke:0.15px currentColor;">T</div>
<div class="a" style="left:0px;top:229px;width:28px;height:800px;background:#222222;"></div>
<div class="a" style="left:28px;top:229px;width:1px;height:800px;background:#8a8a8a;"></div>
<div class="a" style="left:0px;top:414px;width:28px;height:20px;background:#5d5d5d;"></div>
<div class="a" style="left:26px;top:414px;width:2px;height:20px;background:#107c41;"></div>
<div class="a" style="left:0px;top:374px;width:28px;height:1px;background:#4d4d4d;"></div>
<div class="t" style="left:9.83px;top:356.25px;font-size:15px;color:#e0e0e0;-webkit-text-stroke:0.15px currentColor;">1</div>
<div class="a" style="left:0px;top:414px;width:28px;height:1px;background:#4d4d4d;"></div>
<div class="t" style="left:9.83px;top:396.25px;font-size:15px;color:#e0e0e0;-webkit-text-stroke:0.15px currentColor;">2</div>
<div class="a" style="left:0px;top:434px;width:28px;height:1px;background:#4d4d4d;"></div>
<div class="t" style="left:9.83px;top:416.75px;font-size:15px;color:#e0e0e0;-webkit-text-stroke:0.15px currentColor;">3</div>
<div class="a" style="left:0px;top:474px;width:28px;height:1px;background:#4d4d4d;"></div>
<div class="t" style="left:9.83px;top:456.25px;font-size:15px;color:#e0e0e0;-webkit-text-stroke:0.15px currentColor;">4</div>
<div class="a" style="left:0px;top:514px;width:28px;height:1px;background:#4d4d4d;"></div>
<div class="t" style="left:9.83px;top:496.25px;font-size:15px;color:#e0e0e0;-webkit-text-stroke:0.15px currentColor;">5</div>
<div class="a" style="left:0px;top:554px;width:28px;height:1px;background:#4d4d4d;"></div>
<div class="t" style="left:9.83px;top:536.25px;font-size:15px;color:#e0e0e0;-webkit-text-stroke:0.15px currentColor;">6</div>
<div class="a" style="left:0px;top:594px;width:28px;height:1px;background:#4d4d4d;"></div>
<div class="t" style="left:9.83px;top:576.25px;font-size:15px;color:#e0e0e0;-webkit-text-stroke:0.15px currentColor;">7</div>
<div class="a" style="left:0px;top:634px;width:28px;height:1px;background:#4d4d4d;"></div>
<div class="t" style="left:9.83px;top:616.25px;font-size:15px;color:#e0e0e0;-webkit-text-stroke:0.15px currentColor;">8</div>
<div class="a" style="left:0px;top:654px;width:28px;height:1px;background:#4d4d4d;"></div>
<div class="t" style="left:9.83px;top:636.75px;font-size:15px;color:#e0e0e0;-webkit-text-stroke:0.15px currentColor;">9</div>
<div class="a" style="left:0px;top:694px;width:28px;height:1px;background:#4d4d4d;"></div>
<div class="t" style="left:5.66px;top:676.25px;font-size:15px;color:#e0e0e0;-webkit-text-stroke:0.15px currentColor;">10</div>
<div class="a" style="left:0px;top:734px;width:28px;height:1px;background:#4d4d4d;"></div>
<div class="t" style="left:6.21px;top:716.25px;font-size:15px;color:#e0e0e0;-webkit-text-stroke:0.15px currentColor;">11</div>
<div class="a" style="left:0px;top:774px;width:28px;height:1px;background:#4d4d4d;"></div>
<div class="t" style="left:5.66px;top:756.25px;font-size:15px;color:#e0e0e0;-webkit-text-stroke:0.15px currentColor;">12</div>
<div class="a" style="left:0px;top:814px;width:28px;height:1px;background:#4d4d4d;"></div>
<div class="t" style="left:5.66px;top:796.25px;font-size:15px;color:#e0e0e0;-webkit-text-stroke:0.15px currentColor;">13</div>
<div class="a" style="left:0px;top:854px;width:28px;height:1px;background:#4d4d4d;"></div>
<div class="t" style="left:5.66px;top:836.25px;font-size:15px;color:#e0e0e0;-webkit-text-stroke:0.15px currentColor;">14</div>
<div class="a" style="left:0px;top:894px;width:28px;height:1px;background:#4d4d4d;"></div>
<div class="t" style="left:5.66px;top:876.25px;font-size:15px;color:#e0e0e0;-webkit-text-stroke:0.15px currentColor;">15</div>
<div class="a" style="left:0px;top:934px;width:28px;height:1px;background:#4d4d4d;"></div>
<div class="t" style="left:5.66px;top:916.25px;font-size:15px;color:#e0e0e0;-webkit-text-stroke:0.15px currentColor;">16</div>
<div class="a" style="left:0px;top:963px;width:28px;height:1px;background:#4d4d4d;"></div>
<div class="t" style="left:5.66px;top:945.25px;font-size:15px;color:#e0e0e0;-webkit-text-stroke:0.15px currentColor;">17</div>
<div class="a" style="left:0px;top:992px;width:28px;height:1px;background:#4d4d4d;"></div>
<div class="t" style="left:5.66px;top:974.25px;font-size:15px;color:#e0e0e0;-webkit-text-stroke:0.15px currentColor;">18</div>
<div class="a" style="left:0px;top:1021px;width:28px;height:1px;background:#4d4d4d;"></div>
<div class="t" style="left:5.66px;top:1003.25px;font-size:15px;color:#e0e0e0;-webkit-text-stroke:0.15px currentColor;">19</div>
<div class="a" style="left:0px;top:1050px;width:28px;height:1px;background:#4d4d4d;"></div>
<div class="t" style="left:5.66px;top:1032.25px;font-size:15px;color:#e0e0e0;-webkit-text-stroke:0.15px currentColor;">20</div>
<div class="a" style="left:29px;top:229px;width:1870px;height:800px;background:#fff;overflow:hidden">
<div class="a" style="left:0;top:0;width:1038px;height:800px;background:#d8e9da"></div>
<svg class="a" style="left:0px;top:0px;" width="72" height="145" viewBox="0 0 72 145"><rect width="72" height="145" fill="#d8e9da"/><path d="M0 0H72V36.25z M72 36.25V108.75L0 72.5z M0 145L72 108.75V145z" fill="#35633a"/></svg>
<svg class="a" style="left:73px;top:0px;" width="72" height="145" viewBox="0 0 72 145"><rect width="72" height="145" fill="#d8e9da"/><path d="M0 0H72V36.25z M72 36.25V108.75L0 72.5z M0 145L72 108.75V145z" fill="#35633a"/></svg>
<div class="a" style="left:72px;top:0px;width:1px;height:145px;background:#f4f8f4;"></div>
</div>
<div class="a" style="left:29px;top:374px;width:1007px;height:40px;background:#afd2b7;"></div>
<div class="a" style="left:29px;top:594px;width:591px;height:40px;background:#afd2b7;"></div>
<div class="a" style="left:650px;top:594px;width:386px;height:40px;background:#afd2b7;"></div>
<div class="a" style="left:29px;top:894px;width:1007px;height:40px;background:#afd2b7;"></div>
<div class="t" style="left:218.30px;top:273.10px;font-size:58px;color:#386840;transform:scaleX(0.8919);transform-origin:0 0;">ОБЗОР БЮДЖЕТА</div>
<div class="t" style="left:92.50px;top:385.00px;font-size:18px;color:#1f3a2a;font-weight:bold;transform:scaleX(1.0221);transform-origin:0 0;-webkit-text-stroke:0.35px currentColor;">Остаток</div>
<div class="t" style="left:92.00px;top:606.50px;font-size:18px;color:#1f3a2a;font-weight:bold;transform:scaleX(0.9263);transform-origin:0 0;-webkit-text-stroke:0.35px currentColor;">Доходы</div>
<div class="t" style="left:684.00px;top:606.00px;font-size:18px;color:#1f3a2a;font-weight:bold;transform:scaleX(0.9457);transform-origin:0 0;-webkit-text-stroke:0.35px currentColor;">Расходы</div>
<div class="t" style="left:92.30px;top:905.90px;font-size:18px;color:#1f3a2a;font-weight:bold;transform:scaleX(0.9729);transform-origin:0 0;-webkit-text-stroke:0.35px currentColor;">Разбивка по фактическим расходам</div>
<div class="a" style="left:58px;top:434px;width:562px;height:1px;background:#82bd8e;"></div>
<div class="a" style="left:650px;top:434px;width:386px;height:1px;background:#82bd8e;"></div>
<div class="a" style="left:58px;top:474px;width:562px;height:1px;background:#82bd8e;"></div>
<div class="a" style="left:650px;top:474px;width:386px;height:1px;background:#82bd8e;"></div>
<div class="a" style="left:58px;top:514px;width:562px;height:1px;background:#82bd8e;"></div>
<div class="a" style="left:650px;top:514px;width:386px;height:1px;background:#82bd8e;"></div>
<div class="a" style="left:58px;top:554px;width:562px;height:1px;background:#82bd8e;"></div>
<div class="a" style="left:650px;top:554px;width:386px;height:1px;background:#82bd8e;"></div>
<div class="a" style="left:58px;top:694px;width:562px;height:1px;background:#82bd8e;"></div>
<div class="a" style="left:58px;top:734px;width:562px;height:1px;background:#82bd8e;"></div>
<div class="a" style="left:58px;top:774px;width:562px;height:1px;background:#82bd8e;"></div>
<div class="a" style="left:58px;top:814px;width:562px;height:1px;background:#82bd8e;"></div>
<div class="a" style="left:58px;top:854px;width:562px;height:1px;background:#82bd8e;"></div>
<div class="a" style="left:650px;top:694px;width:386px;height:1px;background:#82bd8e;"></div>
<div class="a" style="left:650px;top:734px;width:386px;height:1px;background:#82bd8e;"></div>
<div class="t" style="left:92.50px;top:446.48px;font-size:16.5px;color:#333d3b;letter-spacing:-0.25px;word-spacing:3.515px;">Запланированный остаток</div>
<div class="t" style="left:521.00px;top:446.90px;font-size:16px;color:#333d3b;word-spacing:0.408px;">1 585 ₽</div>
<div class="t" style="left:683.30px;top:449.07px;font-size:12.5px;color:#333d3b;letter-spacing:-0.45px;word-spacing:2.680px;">Запланированная сумма минус расходы</div>
<div class="t" style="left:92.50px;top:486.48px;font-size:16.5px;color:#333d3b;letter-spacing:-0.25px;word-spacing:4.762px;">Фактический остаток</div>
<div class="t" style="left:521.00px;top:486.90px;font-size:16px;color:#333d3b;word-spacing:0.408px;">1 740 ₽</div>
<div class="t" style="left:683.30px;top:489.07px;font-size:12.5px;color:#333d3b;letter-spacing:-0.45px;word-spacing:2.858px;">Фактическая сумма минус расходы</div>
<div class="t" style="left:92.50px;top:526.48px;font-size:16.5px;color:#333d3b;letter-spacing:-0.25px;">Разница</div>
<div class="t" style="left:521.00px;top:526.90px;font-size:16px;color:#333d3b;word-spacing:-1.041px;">155 ₽</div>
<div class="t" style="left:683.30px;top:529.08px;font-size:12.5px;color:#333d3b;letter-spacing:-0.45px;word-spacing:2.514px;">Фактическая сумма минус запланированная сумма</div>
<div class="t" style="left:342.00px;top:667.33px;font-size:15.5px;color:#1f3a2a;font-weight:bold;transform:scaleX(0.9515);transform-origin:0 0;">Запланированные</div>
<div class="t" style="left:520.70px;top:667.33px;font-size:15.5px;color:#1f3a2a;font-weight:bold;transform:scaleX(0.9486);transform-origin:0 0;">Фактические</div>
<div class="t" style="left:684.00px;top:666.83px;font-size:15.5px;color:#1f3a2a;font-weight:bold;transform:scaleX(0.9515);transform-origin:0 0;">Запланированные</div>
<div class="t" style="left:865.10px;top:666.83px;font-size:15.5px;color:#1f3a2a;font-weight:bold;transform:scaleX(0.9557);transform-origin:0 0;">Фактические</div>
<div class="t" style="left:92.30px;top:706.18px;font-size:16.5px;color:#333d3b;letter-spacing:-0.25px;word-spacing:1.382px;">Доход 1</div>
<div class="t" style="left:342.00px;top:706.60px;font-size:16px;color:#333d3b;word-spacing:0.858px;">6 000 ₽</div>
<div class="t" style="left:520.70px;top:706.60px;font-size:16px;color:#333d3b;word-spacing:0.758px;">5 800 ₽</div>
<div class="t" style="left:92.30px;top:746.18px;font-size:16.5px;color:#333d3b;letter-spacing:-0.25px;word-spacing:2.582px;">Доход 2</div>
<div class="t" style="left:342.00px;top:746.60px;font-size:16px;color:#333d3b;word-spacing:0.858px;">1 000 ₽</div>
<div class="t" style="left:520.70px;top:746.60px;font-size:16px;color:#333d3b;word-spacing:0.758px;">2 300 ₽</div>
<div class="t" style="left:92.30px;top:786.18px;font-size:16.5px;color:#333d3b;letter-spacing:-0.25px;word-spacing:4.785px;">Дополнительный доход</div>
<div class="t" style="left:342.00px;top:786.60px;font-size:16px;color:#333d3b;word-spacing:0.858px;">2 500 ₽</div>
<div class="t" style="left:520.70px;top:786.60px;font-size:16px;color:#333d3b;word-spacing:0.758px;">1 500 ₽</div>
<div class="t" style="left:92.30px;top:826.18px;font-size:16.5px;color:#333d3b;letter-spacing:-0.25px;word-spacing:1.197px;">Общий доход</div>
<div class="t" style="left:342.00px;top:826.60px;font-size:16px;color:#1f2f28;font-weight:bold;word-spacing:0.858px;">9 500 ₽</div>
<div class="t" style="left:520.70px;top:826.60px;font-size:16px;color:#1f2f28;font-weight:bold;word-spacing:0.758px;">9 600 ₽</div>
<div class="t" style="left:684.00px;top:706.60px;font-size:16px;color:#333d3b;word-spacing:0.858px;">7 915 ₽</div>
<div class="t" style="left:865.00px;top:706.60px;font-size:16px;color:#333d3b;word-spacing:0.858px;">7 860 ₽</div>
<div class="a" style="left:277px;top:964px;width:1px;height:65px;background:#cde0d0;"></div>
<div class="a" style="left:384px;top:964px;width:1px;height:65px;background:#cde0d0;"></div>
<div class="a" style="left:491px;top:964px;width:1px;height:65px;background:#cde0d0;"></div>
<div class="a" style="left:597px;top:964px;width:1px;height:65px;background:#cde0d0;"></div>
<div class="a" style="left:704px;top:964px;width:1px;height:65px;background:#cde0d0;"></div>
<div class="a" style="left:811px;top:964px;width:1px;height:65px;background:#cde0d0;"></div>
<div class="a" style="left:918px;top:964px;width:1px;height:65px;background:#cde0d0;"></div>
<div class="a" style="left:277px;top:967px;width:577px;height:16px;background:#ffffff;"></div>
<div class="a" style="left:278px;top:968px;width:575px;height:14px;background:#4b875a;"></div>
<div class="a" style="left:277px;top:992px;width:295px;height:16px;background:#ffffff;"></div>
<div class="a" style="left:278px;top:993px;width:293px;height:14px;background:#afd2bc;"></div>
<div class="a" style="left:277px;top:1017px;width:283px;height:16px;background:#ffffff;"></div>
<div class="a" style="left:278px;top:1018px;width:281px;height:14px;background:#4b875a;"></div>
<div class="t" style="left:228.10px;top:967.62px;font-size:13.5px;color:#595959;transform:scaleX(0.8651);transform-origin:0 0;">Жилье</div>
<div class="t" style="left:206.40px;top:993.32px;font-size:13.5px;color:#595959;transform:scaleX(0.8995);transform-origin:0 0;">Транспорт</div>
<div class="t" style="left:246.50px;top:1018.52px;font-size:13.5px;color:#595959;transform:scaleX(0.7503);transform-origin:0 0;">Еда</div>
<div class="t" style="left:862.70px;top:970.02px;font-size:11.5px;color:#595959;word-spacing:-0.216px;">3 ₽</div>
<div class="t" style="left:579.90px;top:995.02px;font-size:11.5px;color:#595959;word-spacing:-1.616px;">1 ₽</div>
<div class="t" style="left:567.50px;top:1020.23px;font-size:11.5px;color:#595959;word-spacing:-1.616px;">1 ₽</div>
<div class="a" style="left:1209px;top:413px;width:75px;height:23px;background:transparent;border:2px solid #107c41"></div>
<div class="a" style="left:1899px;top:205px;width:21px;height:824px;background:#232323;"></div>
<div class="a" style="left:1903px;top:210px;width:13px;height:13px;background:#4a4a4a;"></div>
<svg class="a" style="left:1905px;top:213px;" width="9" height="6" viewBox="0 0 9 6"><path d="M0.5 5.5L4.5 1l4 4.5z" fill="#9a9a9a"/></svg>
<div class="a" style="left:1903px;top:224px;width:13px;height:588px;background:#363636;"></div>
<div class="a" style="left:1903px;top:224px;width:13px;height:611px;background:#505050;"></div>
<div class="a" style="left:1903px;top:1016px;width:13px;height:13px;background:#4a4a4a;"></div>
<svg class="a" style="left:1905px;top:1020px;" width="9" height="6" viewBox="0 0 9 6"><path d="M0.5 0.5h8L4.5 5z" fill="#9a9a9a"/></svg>
<div class="a" style="left:1903px;top:836px;width:13px;height:180px;background:#363636;"></div>
<div class="a" style="left:1899px;top:229px;width:1px;height:800px;background:#3a3a3a;"></div>
<div class="a" style="left:0px;top:1029px;width:1920px;height:28px;background:#262626;"></div>
<svg class="a" style="left:26px;top:1038px;" width="7" height="10" viewBox="0 0 7 10"><path d="M6 0.5v9L0.5 5z" fill="#9a9a9a"/></svg>
<svg class="a" style="left:54px;top:1038px;" width="7" height="10" viewBox="0 0 7 10"><path d="M1 0.5v9L6.5 5z" fill="#9a9a9a"/></svg>
<div class="a" style="left:101px;top:1029px;width:126px;height:25px;background:linear-gradient(#ffffff 0%,#ffffff 55%,#cfe3d2 100%);border-left:1px solid #e0e0e0;border-right:1px solid #e0e0e0"></div>
<div class="a" style="left:101px;top:1052px;width:126px;height:2px;background:#2e7d42;"></div>
<div class="t" style="left:112.50px;top:1035.99px;font-size:13.3px;color:#2f7a3e;font-weight:bold;transform:scaleX(0.9822);transform-origin:0 0;">Обзор бюджета</div>
<div class="a" style="left:229px;top:1032px;width:133px;height:22px;background:#3f8c85;"></div>
<div class="t" style="left:243.30px;top:1035.99px;font-size:13.3px;color:#ffffff;-webkit-text-stroke:0.15px currentColor;transform:scaleX(0.9735);transform-origin:0 0;">Сводный бюджет</div>
<div class="a" style="left:364px;top:1032px;width:1px;height:22px;background:#8a8a8a;"></div>
<div class="a" style="left:367px;top:1032px;width:133px;height:22px;background:#a98bc2;"></div>
<div class="t" style="left:379.20px;top:1035.99px;font-size:13.3px;color:#1f1f1f;transform:scaleX(0.9493);transform-origin:0 0;">Расходы за месяц</div>
<div class="a" style="left:502px;top:1032px;width:1px;height:22px;background:#8a8a8a;"></div>
<div class="a" style="left:505px;top:1032px;width:183px;height:22px;background:#83cbc6;"></div>
<div class="t" style="left:520.80px;top:1035.99px;font-size:13.3px;color:#1f1f1f;transform:scaleX(0.9603);transform-origin:0 0;">Дополнительные данные</div>
<div class="a" style="left:690px;top:1032px;width:1px;height:22px;background:#8a8a8a;"></div>
<svg class="a" style="left:722px;top:1033px;" width="19" height="19" viewBox="0 0 19 19"><circle cx="9.5" cy="9.5" r="8.2" fill="none" stroke="#f0f0f0" stroke-width="1.3"/><path d="M9.5 5v9M5 9.5h9" stroke="#f0f0f0" stroke-width="1.6"/></svg>
<div class="a" style="left:1152px;top:1038px;width:2px;height:2px;background:#e0e0e0;"></div>
<div class="a" style="left:1152px;top:1042px;width:2px;height:2px;background:#e0e0e0;"></div>
<div class="a" style="left:1152px;top:1046px;width:2px;height:2px;background:#e0e0e0;"></div>
<div class="a" style="left:1169px;top:1036px;width:730px;height:14px;background:#363636;"></div>
<div class="a" style="left:1170px;top:1037px;width:14px;height:12px;background:#4a4a4a;"></div>
<svg class="a" style="left:1174px;top:1039px;" width="6" height="8" viewBox="0 0 6 8"><path d="M5.5 0.5v7L0.5 4z" fill="#9a9a9a"/></svg>
<div class="a" style="left:1185px;top:1037px;width:662px;height:12px;background:#505050;"></div>
<div class="a" style="left:1885px;top:1037px;width:13px;height:12px;background:#4a4a4a;"></div>
<svg class="a" style="left:1889px;top:1039px;" width="6" height="8" viewBox="0 0 6 8"><path d="M0.5 0.5v7L5.5 4z" fill="#9a9a9a"/></svg>
<div class="a" style="left:0px;top:1057px;width:1920px;height:23px;background:#323130;"></div>
<div class="a" style="left:0px;top:1057px;width:1920px;height:1px;background:#3a3937;"></div>
<div class="a" style="left:0px;top:1078px;width:1920px;height:1px;background:#222120;"></div>
<div class="a" style="left:0px;top:1079px;width:1920px;height:1px;background:#f2f2f2;"></div>
<div class="t" style="left:7.30px;top:1062.58px;font-size:12.5px;color:#e6e6e6;-webkit-text-stroke:0.15px currentColor;transform:scaleX(0.9327);transform-origin:0 0;">Готово</div>
<svg class="a" style="left:62px;top:1060px;" width="18" height="16" viewBox="0 0 18 16"><path d="M6.3 2.2A6 6 0 0 0 6.3 14.2" fill="none" stroke="#e8e8e8" stroke-width="1.2" stroke-dasharray="2 1.3"/><path d="M7.5 1V7.8M5.6 6L7.5 7.9 9.4 6M7.5 6.6H14M12.2 4.8L14 6.6 12.2 8.4M8.3 11.3L11 14.4 16.7 8.8" fill="none" stroke="#ececec" stroke-width="1.1"/></svg>
<div class="t" style="left:81.70px;top:1062.58px;font-size:12.5px;color:#e6e6e6;-webkit-text-stroke:0.15px currentColor;transform:scaleX(0.9220);transform-origin:0 0;">Специальные возможности: все в порядке</div>
<div class="a" style="left:1617px;top:1058px;width:40px;height:20px;background:#5a5a5a;"></div>
<svg class="a" style="left:1630px;top:1061px;" width="14" height="14" viewBox="0 0 14 14"><path d="M0.5 0.5h12v12h-12zM4.5 0.5v12M8.5 0.5v12M0.5 4.5h12M0.5 8.5h12" fill="none" stroke="#ffffff" stroke-width="1"/></svg>
<svg class="a" style="left:1670px;top:1061px;" width="15" height="14" viewBox="0 0 15 14"><rect x="0.5" y="0.5" width="13" height="12" fill="none" stroke="#ffffff" stroke-width="1"/><rect x="3.5" y="2.5" width="7" height="8" fill="none" stroke="#ffffff" stroke-width="1"/><path d="M5 4.5h4M5 6.5h4M5 8.5h4" stroke="#ffffff" stroke-width="1"/></svg>
<svg class="a" style="left:1710px;top:1061px;" width="15" height="14" viewBox="0 0 15 14"><rect x="0.5" y="0.5" width="13" height="12" fill="none" stroke="#ffffff" stroke-width="1"/><path d="M0.5 7.5h8V0.5M4.5 0.5v7" fill="none" stroke="#ffffff" stroke-width="1"/></svg>
<div class="a" style="left:1743px;top:1068px;width:9px;height:1px;background:#e0e0e0;"></div>
<div class="a" style="left:1757px;top:1068px;width:99px;height:1px;background:#c8c8c8;"></div>
<div class="a" style="left:1804px;top:1062px;width:5px;height:13px;background:#f0f0f0;"></div>
<div class="a" style="left:1860px;top:1068px;width:10px;height:1px;background:#e0e0e0;"></div>
<div class="a" style="left:1864px;top:1064px;width:1px;height:9px;background:#e0e0e0;"></div>
<div class="t" style="left:1883.00px;top:1062.88px;font-size:12.5px;color:#f0f0f0;-webkit-text-stroke:0.15px currentColor;transform:scaleX(0.8182);transform-origin:0 0;">100 %</div>
<div class="a" style="left:1239px;top:359px;width:265px;height:56px;background:#323130;border-radius:5px;box-shadow:0 4px 12px rgba(0,0,0,0.16)"></div>
<div class="a" style="left:1243.5px;top:363px;width:63px;height:24px;background:#323130;border:1px solid #5a5a5a"></div>
<div class="t" style="left:1246.00px;top:367.19px;font-size:13.3px;color:#f2f2f2;-webkit-text-stroke:0.15px currentColor;transform:scaleX(0.9276);transform-origin:0 0;">Malgun (</div>
<div class="a" style="left:1292px;top:364px;width:12px;height:22px;background:#323130;"></div>
<svg class="a" style="left:1297px;top:372px;" width="8" height="6" viewBox="0 0 8 6"><path d="M1 1.5l3 3 3-3" fill="none" stroke="#e0e0e0" stroke-width="1.1"/></svg>
<div class="a" style="left:1307px;top:363px;width:46px;height:24px;background:#323130;border:1px solid #5a5a5a"></div>
<div class="t" style="left:1310.50px;top:367.19px;font-size:13.3px;color:#f2f2f2;-webkit-text-stroke:0.15px currentColor;">14</div>
<svg class="a" style="left:1342px;top:372px;" width="8" height="6" viewBox="0 0 8 6"><path d="M1 1.5l3 3 3-3" fill="none" stroke="#e0e0e0" stroke-width="1.1"/></svg>
<div class="t" style="left:1357.00px;top:366.05px;font-size:17px;color:#e0e0e0;transform:scaleX(0.9701);transform-origin:0 0;">A</div>
<svg class="a" style="left:1368px;top:366px;" width="6" height="5" viewBox="0 0 6 5"><path d="M0.7 4l2.3-2.5 2.3 2.5" fill="none" stroke="#3ba0e6" stroke-width="1.1"/></svg>
<div class="t" style="left:1380.00px;top:368.60px;font-size:14px;color:#e0e0e0;-webkit-text-stroke:0.15px currentColor;transform:scaleX(1.0173);transform-origin:0 0;">A</div>
<svg class="a" style="left:1389px;top:366px;" width="6" height="5" viewBox="0 0 6 5"><path d="M0.7 1l2.3 2.5 2.3-2.5" fill="none" stroke="#3ba0e6" stroke-width="1.1"/></svg>
<svg class="a" style="left:1400px;top:367px;" width="18" height="15" viewBox="0 0 18 15"><rect x="0.5" y="0.5" width="15" height="10" fill="none" stroke="#e0e0e0" stroke-width="1"/><path d="M2.5 2.5v6M13.5 2.5v6" stroke="#e0e0e0" stroke-width="0.8"/><path d="M7.5 3.2A2.2 2.2 0 1 0 7.5 7.8" fill="none" stroke="#e0e0e0" stroke-width="1.1"/><path d="M8.5 9v3.5c0 1 1.6 1.6 3.5 1.6s3.5-0.6 3.5-1.6V9" fill="#323130" stroke="#f2c45a" stroke-width="1"/><ellipse cx="12" cy="9" rx="3.5" ry="1.5" fill="#323130" stroke="#f2c45a" stroke-width="1"/><path d="M8.5 11c0 1 1.6 1.6 3.5 1.6s3.5-0.6 3.5-1.6" fill="none" stroke="#f2c45a" stroke-width="1"/></svg>
<svg class="a" style="left:1422px;top:372px;" width="8" height="6" viewBox="0 0 8 6"><path d="M1 1.5l3 3 3-3" fill="none" stroke="#e0e0e0" stroke-width="1.1"/></svg>
<svg class="a" style="left:1437px;top:367.5px;" width="17" height="16" viewBox="0 0 17 16"><circle cx="4" cy="4" r="2.9" fill="none" stroke="#e2e2e2" stroke-width="1.1"/><circle cx="12" cy="11" r="2.9" fill="none" stroke="#e2e2e2" stroke-width="1.1"/><path d="M14.6 0.8L3 14.4" stroke="#e2e2e2" stroke-width="1.1"/></svg>
<div class="t" style="left:1458.70px;top:370.55px;font-size:9px;color:#c8c8c8;transform:scaleX(1.0655);transform-origin:0 0;">000</div>
<svg class="a" style="left:1480px;top:366px;" width="17" height="17" viewBox="0 0 17 17"><rect x="0.5" y="0.5" width="15" height="15" fill="none" stroke="#e0e0e0" stroke-width="1"/><path d="M8 0.5v3.5M8 12v3.5" stroke="#e0e0e0" stroke-width="1"/><rect x="0.6" y="3.6" width="14.8" height="8.4" fill="#323130" stroke="#3ba0e6" stroke-width="1.2"/><path d="M3.2 7.8h9.6M5.2 5.8l-2 2 2 2M10.8 5.8l2 2-2 2" fill="none" stroke="#3ba0e6" stroke-width="1.2"/></svg>
<div class="t" style="left:1247.00px;top:392.40px;font-size:14px;color:#e0e0e0;font-weight:bold;transform:scaleX(1.0827);transform-origin:0 0;">Ж</div>
<div class="t" style="left:1271.00px;top:392.40px;font-size:14px;color:#e0e0e0;-webkit-text-stroke:0.15px currentColor;font-style:italic;transform:scaleX(1.1271);transform-origin:0 0;">К</div>
<div class="a" style="left:1291px;top:392px;width:14px;height:1px;background:#ececec;"></div>
<div class="a" style="left:1293px;top:396px;width:10px;height:1px;background:#ececec;"></div>
<div class="a" style="left:1291px;top:400px;width:14px;height:1px;background:#ececec;"></div>
<div class="a" style="left:1293px;top:404px;width:10px;height:1px;background:#ececec;"></div>
<svg class="a" style="left:1312px;top:389px;" width="18" height="15" viewBox="0 0 18 15"><path d="M2.5 8.5L8.3 2.7c0.6-0.6 1.4-0.6 1.7 0.2L11.8 8.2L7 13.2z" fill="none" stroke="#e0e0e0" stroke-width="1.1" stroke-linejoin="round"/><path d="M13.2 5.2c1.2 0.8 1.9 2.5 1.6 4.8" fill="none" stroke="#6cb8ec" stroke-width="1.4"/></svg>
<div class="a" style="left:1312px;top:403px;width:16px;height:4px;background:#ffff00;"></div>
<svg class="a" style="left:1334px;top:396px;" width="8" height="6" viewBox="0 0 8 6"><path d="M1 1.5l3 3 3-3" fill="none" stroke="#e0e0e0" stroke-width="1.1"/></svg>
<div class="t" style="left:1351.00px;top:390.60px;font-size:14px;color:#e0e0e0;-webkit-text-stroke:0.15px currentColor;transform:scaleX(1.0709);transform-origin:0 0;">A</div>
<div class="a" style="left:1349px;top:403px;width:16px;height:4px;background:#ff0000;"></div>
<svg class="a" style="left:1371px;top:396px;" width="8" height="6" viewBox="0 0 8 6"><path d="M1 1.5l3 3 3-3" fill="none" stroke="#e0e0e0" stroke-width="1.1"/></svg>
<svg class="a" style="left:1386px;top:391px;" width="16" height="17" viewBox="0 0 16 17"><g fill="#d8d8d8"><rect x="0" y="0" width="1" height="1"/><rect x="0" y="2" width="1" height="1"/><rect x="0" y="4" width="1" height="1"/><rect x="0" y="6" width="1" height="1"/><rect x="0" y="8" width="1" height="1"/><rect x="0" y="10" width="1" height="1"/><rect x="0" y="12" width="1" height="1"/><rect x="2" y="0" width="1" height="1"/><rect x="2" y="6" width="1" height="1"/><rect x="4" y="0" width="1" height="1"/><rect x="4" y="6" width="1" height="1"/><rect x="6" y="0" width="1" height="1"/><rect x="6" y="6" width="1" height="1"/><rect x="7" y="0" width="1" height="1"/><rect x="7" y="2" width="1" height="1"/><rect x="7" y="4" width="1" height="1"/><rect x="7" y="6" width="1" height="1"/><rect x="7" y="8" width="1" height="1"/><rect x="7" y="10" width="1" height="1"/><rect x="7" y="12" width="1" height="1"/><rect x="8" y="0" width="1" height="1"/><rect x="8" y="6" width="1" height="1"/><rect x="10" y="0" width="1" height="1"/><rect x="10" y="6" width="1" height="1"/><rect x="12" y="0" width="1" height="1"/><rect x="12" y="6" width="1" height="1"/><rect x="14" y="0" width="1" height="1"/><rect x="14" y="2" width="1" height="1"/><rect x="14" y="4" width="1" height="1"/><rect x="14" y="6" width="1" height="1"/><rect x="14" y="8" width="1" height="1"/><rect x="14" y="10" width="1" height="1"/><rect x="14" y="12" width="1" height="1"/></g><rect x="0" y="14" width="15" height="1.6" fill="#f0f0f0"/></svg>
<svg class="a" style="left:1408px;top:396px;" width="8" height="6" viewBox="0 0 8 6"><path d="M1 1.5l3 3 3-3" fill="none" stroke="#e0e0e0" stroke-width="1.1"/></svg>
<svg class="a" style="left:1421px;top:390px;" width="18" height="17" viewBox="0 0 18 17"><path d="M10 5.5H1.8M4.6 2.6L1.6 5.5 4.6 8.4" fill="none" stroke="#3ba0e6" stroke-width="1.3"/><text x="9.8" y="7.8" font-family="Liberation Sans" font-size="9.5" fill="#e6e6e6">,0</text><text x="3.6" y="15.6" font-family="Liberation Sans" font-size="9.5" fill="#e6e6e6">,00</text></svg>
<svg class="a" style="left:1445px;top:390px;" width="18" height="17" viewBox="0 0 18 17"><text x="3.6" y="7.8" font-family="Liberation Sans" font-size="9.5" fill="#e6e6e6">,00</text><path d="M1 12.2H9.6M6.8 9.3L9.8 12.2 6.8 15.1" fill="none" stroke="#3ba0e6" stroke-width="1.3"/><text x="9.8" y="15.6" font-family="Liberation Sans" font-size="9.5" fill="#e6e6e6">,0</text></svg>
<svg class="a" style="left:1466px;top:389px;" width="18" height="18" viewBox="0 0 18 18"><path d="M1.2 10.8L6.6 6.4L11.4 11.2L7 16.6C4.6 15.4 2.4 13.2 1.2 10.8Z" fill="#f2c45a" stroke="#f7dc90" stroke-width="0.6"/><path d="M4.2 12.5L7.6 15.4M3.8 11l2.2 1.8" stroke="#e89a28" stroke-width="1.3"/><path d="M6.6 6.4L8.6 4.6L13 9L11.4 11.2Z" fill="#323130" stroke="#e8e8e8" stroke-width="1"/><path d="M10 6L14.6 1.4C15.2 0.8 16 0.8 16.6 1.4C17.2 2 17.2 2.8 16.6 3.4L12 8" fill="#323130" stroke="#e8e8e8" stroke-width="1"/></svg>
<div class="a" style="left:1239px;top:430px;width:321px;height:533px;background:#323130;border-radius:5px;box-shadow:0 6px 16px rgba(0,0,0,0.16)"></div>
<svg class="a" style="left:1254px;top:436px;" width="14" height="18" viewBox="0 0 14 18"><path d="M4 1.5L10.2 13M10 1.5L3.8 13" stroke="#d0d0d0" stroke-width="1.1"/><circle cx="3.8" cy="15" r="1.7" fill="none" stroke="#3ba0e6" stroke-width="1.2"/><circle cx="10.2" cy="15" r="1.7" fill="none" stroke="#3ba0e6" stroke-width="1.2"/></svg>
<div class="t" style="left:1278.50px;top:439.19px;font-size:13.3px;color:#f2f2f2;-webkit-text-stroke:0.15px currentColor;transform:scaleX(0.8537);transform-origin:0 0;">Вырезать</div>
<div class="a" style="left:1286.0px;top:452px;width:8.16064132874773px;height:1px;background:#f2f2f2;"></div>
<svg class="a" style="left:1252px;top:464px;" width="18" height="18" viewBox="0 0 18 18"><path d="M8 2V1.5H1.5v12.5H6" fill="none" stroke="#d8d8d8" stroke-width="1"/><path d="M7.5 5.5h6l3 3v8.5h-9z" fill="none" stroke="#d8d8d8" stroke-width="1"/><path d="M10 11.5h4.5M10 14h4.5" stroke="#d8d8d8" stroke-width="1"/></svg>
<div class="t" style="left:1278.50px;top:467.19px;font-size:13.3px;color:#f2f2f2;-webkit-text-stroke:0.15px currentColor;transform:scaleX(0.8937);transform-origin:0 0;">Копировать</div>
<div class="a" style="left:1278.0px;top:480px;width:6.924023854089583px;height:1px;background:#f2f2f2;"></div>
<svg class="a" style="left:1254px;top:492px;" width="17" height="18" viewBox="0 0 17 18"><path d="M2 3.5v13h6" fill="none" stroke="#f4a82c" stroke-width="1.6"/><path d="M12.5 3v4" fill="none" stroke="#f4a82c" stroke-width="1.6"/><path d="M4.5 6.5V3.5h2c0-1.5 1-2.5 2-2.5s2 1 2 2.5h2v3z" fill="#323130" stroke="#c8c8c8" stroke-width="1"/><rect x="8.5" y="8.5" width="6.5" height="8" fill="#323130" stroke="#e0e0e0" stroke-width="1"/></svg>
<div class="t" style="left:1279.60px;top:496.59px;font-size:13.3px;color:#ffffff;font-weight:bold;transform:scaleX(0.8688);transform-origin:0 0;">Параметры вставки:</div>
<svg class="a" style="left:1279px;top:521px;" width="21" height="24" viewBox="0 0 21 24"><path d="M4.5 3.5H1.5v19h7" fill="none" stroke="#f0a830" stroke-width="1.6"/><path d="M13 3.5h3v6" fill="none" stroke="#f0a830" stroke-width="1.6"/><path d="M5 2.5h2.5c0-1 1-2 1.5-2s1.5 1 1.5 2H13v3H5z" fill="#323130" stroke="#e0e0e0" stroke-width="1"/><text x="9" y="23" font-family="Liberation Sans" font-size="13" fill="#e0e0e0">A</text></svg>
<div class="t" style="left:1278.50px;top:557.90px;font-size:13.3px;color:#f2f2f2;-webkit-text-stroke:0.15px currentColor;transform:scaleX(0.8623);transform-origin:0 0;">Специальная вставка...</div>
<div class="a" style="left:1353.0px;top:570.7px;width:6.09272014895537px;height:1px;background:#f2f2f2;"></div>
<div class="a" style="left:1273px;top:580px;width:284px;height:1px;background:#474747;"></div>
<svg class="a" style="left:1252px;top:587px;" width="18" height="17" viewBox="0 0 18 17"><circle cx="11" cy="6.5" r="5.5" fill="none" stroke="#3ba0e6" stroke-width="1.2"/><path d="M7 10.5L1 16" stroke="#3ba0e6" stroke-width="1.4"/><path d="M11 5.5v3.5" stroke="#e0e0e0" stroke-width="1.1"/><circle cx="11" cy="3.8" r="0.7" fill="#e0e0e0"/></svg>
<div class="t" style="left:1278.50px;top:588.80px;font-size:13.3px;color:#f2f2f2;-webkit-text-stroke:0.15px currentColor;transform:scaleX(0.9036);transform-origin:0 0;">Интеллектуальный поиск</div>
<div class="a" style="left:1278.0px;top:601.6px;width:8.637887912550374px;height:1px;background:#f2f2f2;"></div>
<div class="a" style="left:1273px;top:611px;width:284px;height:1px;background:#474747;"></div>
<div class="t" style="left:1278.50px;top:619.70px;font-size:13.3px;color:#f2f2f2;-webkit-text-stroke:0.15px currentColor;transform:scaleX(0.8301);transform-origin:0 0;">Вставить...</div>
<div class="a" style="left:1308.0px;top:632.5px;width:6.167096905361864px;height:1px;background:#f2f2f2;"></div>
<div class="t" style="left:1278.50px;top:648.10px;font-size:13.3px;color:#f2f2f2;-webkit-text-stroke:0.15px currentColor;transform:scaleX(0.8486);transform-origin:0 0;">Удалить...</div>
<div class="a" style="left:1278.0px;top:660.9px;width:7.170057241138373px;height:1px;background:#f2f2f2;"></div>
<div class="t" style="left:1278.50px;top:675.90px;font-size:13.3px;color:#f2f2f2;-webkit-text-stroke:0.15px currentColor;transform:scaleX(0.9001);transform-origin:0 0;">Очистить содержимое</div>
<div class="a" style="left:1367.0px;top:688.7px;width:8.008549865828483px;height:1px;background:#f2f2f2;"></div>
<div class="a" style="left:1273px;top:698px;width:284px;height:1px;background:#474747;"></div>
<svg class="a" style="left:1252px;top:705px;" width="17" height="16" viewBox="0 0 17 16"><rect x="0.5" y="3.5" width="15.5" height="11.5" fill="none" stroke="#8a8a8a" stroke-width="1"/><path d="M4 1L1.5 6h2.5l-1 4 3-5H3.5l2-4z" fill="#8a8a8a"/><path d="M4.5 9.5h8v3h-8z" fill="none" stroke="#8a8a8a" stroke-width="1"/></svg>
<div class="t" style="left:1278.50px;top:706.80px;font-size:13.3px;color:#7a7a7a;transform:scaleX(0.8829);transform-origin:0 0;">Экспресс-анализ</div>
<div class="a" style="left:1366.0px;top:719.6px;width:5.384262675447768px;height:1px;background:#7a7a7a;"></div>
<div class="t" style="left:1278.50px;top:734.60px;font-size:13.3px;color:#f2f2f2;-webkit-text-stroke:0.15px currentColor;transform:scaleX(0.9042);transform-origin:0 0;">Фильтр</div>
<div class="a" style="left:1278.0px;top:747.4px;width:9.142759336003088px;height:1px;background:#f2f2f2;"></div>
<svg class="a" style="left:1543px;top:737px;" width="8" height="10" viewBox="0 0 8 10"><path d="M1 0.5l5 4.5-5 4.5" fill="none" stroke="#e0e0e0" stroke-width="1.1"/></svg>
<div class="t" style="left:1278.50px;top:762.90px;font-size:13.3px;color:#f2f2f2;-webkit-text-stroke:0.15px currentColor;transform:scaleX(0.8960);transform-origin:0 0;">Сортировка</div>
<div class="a" style="left:1278.0px;top:775.7px;width:8.605566943391072px;height:1px;background:#f2f2f2;"></div>
<svg class="a" style="left:1543px;top:765px;" width="8" height="10" viewBox="0 0 8 10"><path d="M1 0.5l5 4.5-5 4.5" fill="none" stroke="#e0e0e0" stroke-width="1.1"/></svg>
<div class="a" style="left:1273px;top:785px;width:284px;height:1px;background:#474747;"></div>
<svg class="a" style="left:1252px;top:792px;" width="17" height="16" viewBox="0 0 17 16"><rect x="0.5" y="0.5" width="15" height="14.5" fill="none" stroke="#d8d8d8" stroke-width="1"/><path d="M0.5 4h15M0.5 7.5h15M0.5 11h15M8 4v11" stroke="#d8d8d8" stroke-width="1"/><path d="M2.5 2l1.5 1.3L5.5 2M10.5 2l1.5 1.3L13.5 2" fill="none" stroke="#3ba0e6" stroke-width="1"/></svg>
<div class="t" style="left:1278.50px;top:793.80px;font-size:13.3px;color:#f2f2f2;-webkit-text-stroke:0.15px currentColor;transform:scaleX(0.8864);transform-origin:0 0;">Получить данные из таблицы или диапазона...</div>
<div class="a" style="left:1278.0px;top:806.6px;width:8.473259153940468px;height:1px;background:#f2f2f2;"></div>
<div class="a" style="left:1273px;top:816px;width:284px;height:1px;background:#474747;"></div>
<svg class="a" style="left:1252px;top:822px;" width="17" height="17" viewBox="0 0 17 17"><path d="M5 3.5h11v8H7.5l-3 3v-3H3V8" fill="none" stroke="#d8d8d8" stroke-width="1"/><path d="M3.5 0.5v6M0.5 3.5h6" stroke="#3fc060" stroke-width="1.2"/></svg>
<div class="t" style="left:1278.50px;top:824.80px;font-size:13.3px;color:#f2f2f2;-webkit-text-stroke:0.15px currentColor;transform:scaleX(0.8872);transform-origin:0 0;">Вставить примечание</div>
<div class="a" style="left:1366.0px;top:837.6px;width:6.1475779862657145px;height:1px;background:#f2f2f2;"></div>
<div class="a" style="left:1273px;top:847px;width:284px;height:1px;background:#474747;"></div>
<svg class="a" style="left:1254px;top:853px;" width="14" height="17" viewBox="0 0 14 17"><rect x="0.5" y="0.5" width="11.5" height="15.5" fill="none" stroke="#d8d8d8" stroke-width="1"/><rect x="3" y="4" width="2" height="2" fill="none" stroke="#d8d8d8" stroke-width="0.8"/><rect x="3" y="9" width="2" height="2" fill="none" stroke="#d8d8d8" stroke-width="0.8"/><path d="M6.5 5h2.5M6.5 10h2.5" stroke="#d8d8d8" stroke-width="0.8"/></svg>
<div class="t" style="left:1278.50px;top:855.90px;font-size:13.3px;color:#f2f2f2;-webkit-text-stroke:0.15px currentColor;transform:scaleX(0.8804);transform-origin:0 0;">Формат ячеек...</div>
<div class="a" style="left:1323.0px;top:868.7px;width:6.340914449906261px;height:1px;background:#f2f2f2;"></div>
<div class="t" style="left:1278.50px;top:883.60px;font-size:13.3px;color:#f2f2f2;-webkit-text-stroke:0.15px currentColor;transform:scaleX(0.8972);transform-origin:0 0;">Выбрать из раскрывающегося списка...</div>
<div class="a" style="left:1295.0px;top:896.4px;width:6.83417214582025px;height:1px;background:#f2f2f2;"></div>
<div class="t" style="left:1278.50px;top:911.80px;font-size:13.3px;color:#f2f2f2;-webkit-text-stroke:0.15px currentColor;transform:scaleX(0.8931);transform-origin:0 0;">Присвоить имя...</div>
<div class="a" style="left:1331.0px;top:924.6px;width:6.188636200702571px;height:1px;background:#f2f2f2;"></div>
<svg class="a" style="left:1252px;top:939px;" width="18" height="13" viewBox="0 0 18 13"><path d="M6 2.5H4a3.5 3.5 0 0 0 0 7h1.5" fill="none" stroke="#d8d8d8" stroke-width="1.1"/><path d="M4.5 5h4a3 3 0 0 1 0 6H6" fill="none" stroke="#d8d8d8" stroke-width="1.1"/><path d="M11.5 10.5H14a3.5 3.5 0 0 0 0-7h-4a3 3 0 0 0 0 6" fill="none" stroke="#d8d8d8" stroke-width="1.1"/></svg>
<div class="t" style="left:1278.50px;top:939.60px;font-size:13.3px;color:#f2f2f2;-webkit-text-stroke:0.15px currentColor;transform:scaleX(0.8772);transform-origin:0 0;">Ссылка</div>
<div class="a" style="left:1293.0px;top:952.4px;width:8.385305632428947px;height:1px;background:#f2f2f2;"></div>
</body></html>
